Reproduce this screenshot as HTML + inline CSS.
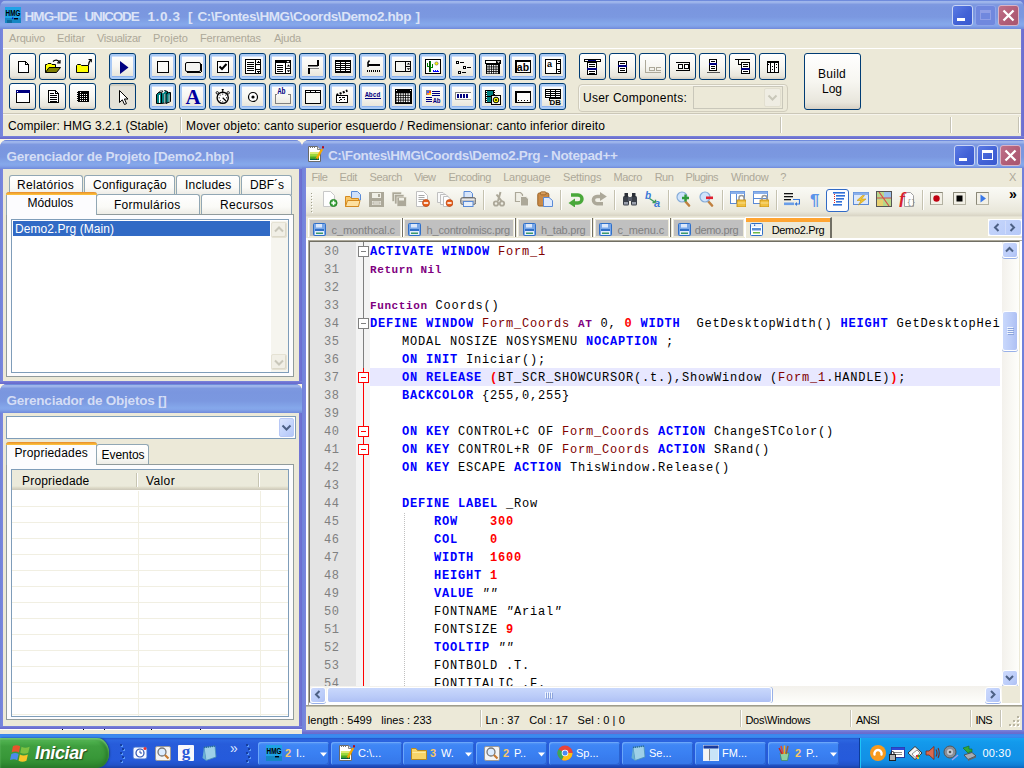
<!DOCTYPE html>
<html><head><meta charset="utf-8"><title>HMG-IDE</title>
<style>
html,body{margin:0;padding:0}
body{width:1024px;height:768px;position:relative;overflow:hidden;background:#fbf7e6;font:11px "Liberation Sans",sans-serif}
.a{position:absolute;box-sizing:border-box}
.t{white-space:pre;height:20px}

.tb{background:linear-gradient(180deg,#6f8bdc 0,#6f8bdc 1px,#a0b7ec 1px,#9cb3ea 2.5px,#7e99e0 4.5px,#7a96df 8px,#7b98e0 17px,#85a8eb 24px,#82a3e8 26px,#7089db 100%)}
.cap{color:#d8e0f6;text-shadow:none}
.xb{border:1px solid #003c74;border-radius:3px;background:linear-gradient(180deg,#fff 0,#f7f6f1 50%,#e8e6dc 88%,#d6d0c5 100%)}
.xb2{border:1px solid #003c74;border-radius:3px;background:linear-gradient(180deg,#fff 0,#f7f6f1 50%,#e8e6dc 88%,#d6d0c5 100%);box-shadow:inset 0 0 0 2px #a9c9f4, inset 0 -3px 0 0 #8db2ee, inset 0 3px 0 0 #cfe0fb}
.xbp{border:1px solid #003c74;border-radius:3px;background:#e4e2d8;box-shadow:inset 0 2px 1px #cfccc0}

.tab{border:1px solid #91a7b4;border-bottom:none;border-radius:3px 3px 0 0;background:linear-gradient(180deg,#fff 0,#fafaf7 60%,#ecebe4 100%)}
.tabsel{border:1px solid #91a7b4;border-bottom:none;border-radius:3px 3px 0 0;background:#fcfcfe;border-top:none}
.tabsel:before{content:"";position:absolute;left:-1px;right:-1px;top:0;height:3px;border-radius:3px 3px 0 0;background:linear-gradient(180deg,#e68b2c,#ffc73c)}
.pane{border:1px solid #919b9c;background:#fcfcfe}
.lv{border:1px solid #7f9db9;background:#fff}

.ntab{border:1px solid #fff;border-bottom:none;background:#c0c0c0;box-shadow:1px 0 0 #716f64,inset 0 0 0 1px #ece9d8}

.ed{position:absolute;left:310px;top:242px;width:690px;height:444px;overflow:hidden}
.ln{position:absolute;left:0;width:29.5px;text-align:right;font:12px/18px 'Liberation Mono',monospace;letter-spacing:.6px;color:#808080;height:18px;white-space:pre}
.cl{position:absolute;left:60px;font:12px/18px 'Liberation Mono',monospace;letter-spacing:.8px;height:18px;white-space:pre;color:#000}
.cl b.p{font-size:11px;letter-spacing:.6px}
.cl b{font-weight:bold}.cl i{font-style:italic}
</style></head>
<body>
<div class="a " style="left:0px;top:0px;width:1024px;height:12px;background:#6c7fd6"></div>
<div class="a " style="left:0px;top:0px;width:1024px;height:139px;background:#7079d6;border-radius:7px 7px 0 0"></div>
<div class="a tb" style="left:0px;top:0px;width:1024px;height:29px;border-radius:7px 7px 0 0"></div>
<div class="a " style="left:0px;top:29px;width:3px;height:108px;background:linear-gradient(90deg,#6f83da,#7c86de)"></div>
<div class="a " style="left:1021px;top:29px;width:3px;height:108px;background:linear-gradient(90deg,#7276d5,#6a6dcf)"></div>
<div class="a " style="left:3px;top:29px;width:1018px;height:107px;background:#ece9d8"></div>
<div class="a " style="left:0px;top:136px;width:1024px;height:3px;background:linear-gradient(180deg,#7b85dd,#6c6fd0 60%,#6a6bcb)"></div>
<svg class="a" style="left:5px;top:7px" width="16" height="16" viewBox="0 0 16 16"><rect width="16" height="16" fill="#1fa2e6"/><rect x="0" y="11" width="16" height="5" fill="#1587c4"/><rect x="2" y="13" width="5" height="3" fill="#0a6a9a"/><text x="0.5" y="9" font-family="Liberation Sans,sans-serif" font-weight="bold" font-size="8.5" textLength="15" lengthAdjust="spacingAndGlyphs" fill="#000">HMG</text><rect x="9" y="11" width="4" height="1.4" fill="#001"/><rect x="7" y="10.5" width="1.3" height="1.3" fill="#00c"/></svg>
<div class="a t" style="left:24.5px;top:7px;font:bold 13.5px/20px 'Liberation Sans',sans-serif;color:#dbe3f7;letter-spacing:-0.929px;">HMG-IDE</div>
<div class="a t" style="left:84.5px;top:7px;font:bold 13.5px/20px 'Liberation Sans',sans-serif;color:#dbe3f7;letter-spacing:-1.181px;">UNICODE</div>
<div class="a t" style="left:147.5px;top:7px;font:bold 13.5px/20px 'Liberation Sans',sans-serif;color:#dbe3f7;letter-spacing:0.594px;">1.0.3</div>
<div class="a t" style="left:188px;top:7px;font:bold 13.5px/20px 'Liberation Sans',sans-serif;color:#dbe3f7;letter-spacing:0.500px;">[</div>
<div class="a t" style="left:197.5px;top:7px;font:bold 13.5px/20px 'Liberation Sans',sans-serif;color:#dbe3f7;letter-spacing:-0.408px;">C:\Fontes\HMG\Coords\Demo2.hbp</div>
<div class="a t" style="left:415.5px;top:7px;font:bold 13.5px/20px 'Liberation Sans',sans-serif;color:#dbe3f7;letter-spacing:0.500px;">]</div>
<div class="a " style="left:952px;top:5px;width:21px;height:21px;background:linear-gradient(135deg,#5b7be4 0,#4262d6 55%,#3a5ad0 100%);border:1px solid #c9d5f5;border-radius:3px"><div class="a" style="left:4px;top:12px;width:8px;height:3px;background:#fff"></div></div>
<div class="a " style="left:975px;top:5px;width:21px;height:21px;background:#7088de;border:1px solid #8ea4ea;border-radius:3px"><div class="a" style="left:4px;top:4px;width:11px;height:10px;border:1px solid #8f9fe6;border-top:3px solid #8f9fe6"></div></div>
<div class="a " style="left:998px;top:5px;width:21px;height:21px;background:linear-gradient(135deg,#bf7088 0,#b05c76 60%,#a9566f 100%);border:1px solid #d9b4c6;border-radius:3px"><svg class="a" style="left:0;top:0" width="19" height="19"><path d="M4.5 4.5 L14.5 14.5 M14.5 4.5 L4.5 14.5" stroke="#fff" stroke-width="2.3" stroke-linecap="butt"/></svg></div>
<div class="a t" style="left:9px;top:28px;font:11px/20px 'Liberation Sans',sans-serif;color:#aca899;letter-spacing:-0.185px;">Arquivo</div>
<div class="a t" style="left:57px;top:28px;font:11px/20px 'Liberation Sans',sans-serif;color:#aca899;letter-spacing:-0.125px;">Editar</div>
<div class="a t" style="left:97px;top:28px;font:11px/20px 'Liberation Sans',sans-serif;color:#aca899;letter-spacing:-0.350px;">Visualizar</div>
<div class="a t" style="left:153px;top:28px;font:11px/20px 'Liberation Sans',sans-serif;color:#aca899;letter-spacing:0.020px;">Projeto</div>
<div class="a t" style="left:200px;top:28px;font:11px/20px 'Liberation Sans',sans-serif;color:#aca899;letter-spacing:-0.124px;">Ferramentas</div>
<div class="a t" style="left:274px;top:28px;font:11px/20px 'Liberation Sans',sans-serif;color:#aca899;letter-spacing:-0.228px;">Ajuda</div>
<div class="a " style="left:3px;top:48px;width:1018px;height:1px;background:#fff"></div>
<div class="a " style="left:3px;top:113px;width:1018px;height:1px;background:#cbc7b8"></div>
<div class="a " style="left:3px;top:114px;width:1018px;height:1px;background:#f6f4ec"></div>
<div class="a xb" style="left:9px;top:53px;width:27px;height:27px;"><svg class="a" style="left:-1px;top:-1px" width="27" height="27" viewBox="0 0 27 27" shape-rendering="crispEdges"><path d="M9.5 8.5H16.5L19.5 11.5V19.5H9.5Z" fill="#fff" stroke="#000" stroke-width="1" /><path d="M16.5 8.5V11.5H19.5" fill="none" stroke="#000" stroke-width="1" /></svg></div>
<div class="a xb" style="left:39px;top:53px;width:27px;height:27px;"><svg class="a" style="left:-1px;top:-1px" width="27" height="27" viewBox="0 0 27 27" shape-rendering="crispEdges"><g shape-rendering="geometricPrecision"><path d="M6.5 19.5V11.5H8L9 10.5H12L13 11.5H16.5V14" fill="#ff0" stroke="#000" stroke-width="1" /><path d="M6.5 19.5L10 14.5H21.5L17.5 19.5Z" fill="#808000" stroke="#000" stroke-width="1" /><path d="M14 8.5C16 6.5 19 6.5 20.5 9.5" fill="none" stroke="#000" stroke-width="1.2" /><path d="M18.2 9.8H21V7" fill="none" stroke="#000" stroke-width="1.2" /></g></svg></div>
<div class="a xb" style="left:69px;top:53px;width:27px;height:27px;"><svg class="a" style="left:-1px;top:-1px" width="27" height="27" viewBox="0 0 27 27" shape-rendering="crispEdges"><g shape-rendering="geometricPrecision"><path d="M7.5 19.5V12.5L8.5 11.5H11.5L12.5 12.5H19.5V19.5Z" fill="#ff0" stroke="#000" stroke-width="1" /><path d="M19.5 12C19.5 9.5 20.5 8 22 6.5" fill="none" stroke="#000" stroke-width="1.1" /><path d="M19.5 6.5H22.3V9.3" fill="none" stroke="#000" stroke-width="1.1" /></g></svg></div>
<div class="a xb2" style="left:109px;top:53px;width:27px;height:27px;"><svg class="a" style="left:-1px;top:-1px" width="27" height="27" viewBox="0 0 27 27" shape-rendering="crispEdges"><g shape-rendering="geometricPrecision"><path d="M11 8V21L19.5 14.5Z" fill="#000080" stroke="none" stroke-width="0" /></g></svg></div>
<div class="a xb2" style="left:149px;top:53px;width:27px;height:27px;"><svg class="a" style="left:-1px;top:-1px" width="27" height="27" viewBox="0 0 27 27" shape-rendering="crispEdges"><rect x="8.5" y="8.5" width="11" height="11" fill="#fbfbf8" stroke="#000" stroke-width="1"/></svg></div>
<div class="a xb2" style="left:179px;top:53px;width:27px;height:27px;"><svg class="a" style="left:-1px;top:-1px" width="27" height="27" viewBox="0 0 27 27" shape-rendering="crispEdges"><g shape-rendering="geometricPrecision"><rect x="6.5" y="9.5" width="15" height="9" rx="1.5" fill="#f4f4f0" stroke="#000" stroke-width="1"/></g><rect x="8" y="19" width="14" height="1" fill="#000"/><rect x="22" y="11" width="1" height="8" fill="#000"/></svg></div>
<div class="a xb2" style="left:209px;top:53px;width:27px;height:27px;"><svg class="a" style="left:-1px;top:-1px" width="27" height="27" viewBox="0 0 27 27" shape-rendering="crispEdges"><rect x="8.5" y="8.5" width="11" height="11" fill="#fff" stroke="#000" stroke-width="1"/><g shape-rendering="geometricPrecision"><path d="M10.5 13.5L13 16L17.5 11" fill="none" stroke="#000" stroke-width="2" /></g></svg></div>
<div class="a xb2" style="left:239px;top:53px;width:27px;height:27px;"><svg class="a" style="left:-1px;top:-1px" width="27" height="27" viewBox="0 0 27 27" shape-rendering="crispEdges"><rect x="6.5" y="6.5" width="15" height="14" fill="#fff" stroke="#000" stroke-width="1"/><rect x="6" y="6" width="16" height="1" fill="#000"/><rect x="8" y="9" width="7" height="1" fill="#000"/><rect x="8" y="11" width="7" height="1" fill="#000"/><rect x="8" y="13" width="7" height="1" fill="#000"/><rect x="8" y="15" width="7" height="1" fill="#000"/><rect x="8" y="17" width="7" height="1" fill="#000"/><rect x="16" y="6" width="1" height="15" fill="#000"/><rect x="17" y="11" width="5" height="1" fill="#000"/><rect x="17" y="16" width="5" height="1" fill="#000"/><rect x="19" y="8" width="1" height="1" fill="#000"/><rect x="18" y="9" width="3" height="1" fill="#000"/><rect x="18" y="18" width="3" height="1" fill="#000"/><rect x="19" y="19" width="1" height="1" fill="#000"/></svg></div>
<div class="a xb2" style="left:269px;top:53px;width:27px;height:27px;"><svg class="a" style="left:-1px;top:-1px" width="27" height="27" viewBox="0 0 27 27" shape-rendering="crispEdges"><rect x="6.5" y="7.5" width="15" height="13" fill="#fff" stroke="#000" stroke-width="1"/><rect x="6" y="7" width="16" height="3" fill="#000"/><g shape-rendering="geometricPrecision"><path d="M17.5 8L20.5 8L19 9.8Z" fill="#fff" stroke="none" stroke-width="0" /></g><rect x="16" y="10" width="1" height="11" fill="#000"/><rect x="8" y="12" width="6" height="1" fill="#000"/><rect x="8" y="14" width="6" height="1" fill="#000"/><rect x="8" y="16" width="6" height="1" fill="#000"/><rect x="8" y="18" width="6" height="1" fill="#000"/><rect x="17" y="15" width="5" height="1" fill="#000"/><g shape-rendering="geometricPrecision"><path d="M17.8 13.6L19.5 11.6L21.2 13.6Z" fill="#000" stroke="none" stroke-width="0" /><path d="M17.8 17.2L19.5 19.2L21.2 17.2Z" fill="#000" stroke="none" stroke-width="0" /></g></svg></div>
<div class="a xb2" style="left:299px;top:53px;width:27px;height:27px;"><svg class="a" style="left:-1px;top:-1px" width="27" height="27" viewBox="0 0 27 27" shape-rendering="crispEdges"><rect x="18" y="7" width="2" height="6" fill="#000"/><rect x="9" y="12" width="11" height="1" fill="#000"/><rect x="9" y="13" width="10" height="1" fill="#808080"/><rect x="9" y="15" width="11" height="1" fill="#808080"/><rect x="9" y="15" width="2" height="6" fill="#000"/></svg></div>
<div class="a xb2" style="left:329px;top:53px;width:27px;height:27px;"><svg class="a" style="left:-1px;top:-1px" width="27" height="27" viewBox="0 0 27 27" shape-rendering="crispEdges"><rect x="6" y="7" width="16" height="13" fill="#000"/><rect x="7" y="9" width="4" height="1" fill="#fff"/><rect x="7" y="11" width="4" height="1" fill="#fff"/><rect x="7" y="13" width="4" height="1" fill="#fff"/><rect x="7" y="15" width="4" height="1" fill="#fff"/><rect x="7" y="17" width="4" height="1" fill="#fff"/><rect x="12" y="9" width="4" height="1" fill="#fff"/><rect x="12" y="11" width="4" height="1" fill="#fff"/><rect x="12" y="13" width="4" height="1" fill="#fff"/><rect x="12" y="15" width="4" height="1" fill="#fff"/><rect x="12" y="17" width="4" height="1" fill="#fff"/><rect x="17" y="9" width="4" height="1" fill="#fff"/><rect x="17" y="11" width="4" height="1" fill="#fff"/><rect x="17" y="13" width="4" height="1" fill="#fff"/><rect x="17" y="15" width="4" height="1" fill="#fff"/><rect x="17" y="17" width="4" height="1" fill="#fff"/></svg></div>
<div class="a xb2" style="left:359px;top:53px;width:27px;height:27px;"><svg class="a" style="left:-1px;top:-1px" width="27" height="27" viewBox="0 0 27 27" shape-rendering="crispEdges"><rect x="9" y="11" width="12" height="2" fill="#000"/><g shape-rendering="geometricPrecision"><path d="M9 14V9.5L10.5 7.5" fill="none" stroke="#000" stroke-width="1.5" /></g><rect x="8" y="17" width="1" height="2" fill="#000"/><rect x="10" y="17" width="1" height="2" fill="#000"/><rect x="12" y="17" width="1" height="2" fill="#000"/><rect x="14" y="17" width="1" height="2" fill="#000"/><rect x="16" y="17" width="1" height="2" fill="#000"/><rect x="18" y="17" width="1" height="2" fill="#000"/><rect x="20" y="17" width="1" height="2" fill="#000"/></svg></div>
<div class="a xb2" style="left:389px;top:53px;width:27px;height:27px;"><svg class="a" style="left:-1px;top:-1px" width="27" height="27" viewBox="0 0 27 27" shape-rendering="crispEdges"><rect x="6.5" y="8.5" width="15" height="10" fill="#f4f4f0" stroke="#000" stroke-width="1"/><rect x="6" y="18" width="16" height="1" fill="#000"/><rect x="16" y="8" width="1" height="11" fill="#000"/><rect x="16" y="13" width="6" height="1" fill="#000"/><g shape-rendering="geometricPrecision"><path d="M17.8 11.6L19.5 9.8L21.2 11.6Z" fill="#000" stroke="none" stroke-width="0" /><path d="M17.8 15.2L19.5 17L21.2 15.2Z" fill="#000" stroke="none" stroke-width="0" /></g></svg></div>
<div class="a xb2" style="left:419px;top:53px;width:27px;height:27px;"><svg class="a" style="left:-1px;top:-1px" width="27" height="27" viewBox="0 0 27 27" shape-rendering="crispEdges"><rect x="6.5" y="6.5" width="15" height="14" fill="#fff" stroke="#000" stroke-width="1"/><rect x="10" y="8" width="2" height="11" fill="#008000"/><rect x="8" y="10" width="1" height="4" fill="#008000"/><rect x="8" y="13" width="3" height="1" fill="#008000"/><rect x="13" y="11" width="1" height="4" fill="#008000"/><rect x="11" y="14" width="3" height="1" fill="#008000"/><rect x="10" y="8" width="1" height="11" fill="#004000"/><g shape-rendering="geometricPrecision"><circle cx="17.5" cy="10.5" r="1.6" fill="#ff0" stroke="#555" stroke-width=".6"/></g><rect x="14" y="18" width="6" height="1" fill="#00f"/><rect x="14" y="17" width="1" height="1" fill="#00f"/><rect x="16" y="17" width="1" height="1" fill="#00f"/><rect x="18" y="17" width="1" height="1" fill="#00f"/></svg></div>
<div class="a xb2" style="left:449px;top:53px;width:27px;height:27px;"><svg class="a" style="left:-1px;top:-1px" width="27" height="27" viewBox="0 0 27 27" shape-rendering="crispEdges"><rect x="7.5" y="8.5" width="2" height="2" fill="#fff" stroke="#000" stroke-width="1"/><rect x="11" y="9" width="4" height="1" fill="#000"/><rect x="14.5" y="13.5" width="2" height="2" fill="#fff" stroke="#000" stroke-width="1"/><rect x="18" y="14" width="4" height="1" fill="#000"/><rect x="9.5" y="18.5" width="2" height="2" fill="#fff" stroke="#000" stroke-width="1"/><rect x="13" y="19" width="4" height="1" fill="#000"/></svg></div>
<div class="a xb2" style="left:479px;top:53px;width:27px;height:27px;"><svg class="a" style="left:-1px;top:-1px" width="27" height="27" viewBox="0 0 27 27" shape-rendering="crispEdges"><rect x="6.5" y="7.5" width="15" height="3" fill="#fff" stroke="#000" stroke-width="1"/><rect x="17" y="7" width="5" height="4" fill="#000"/><g shape-rendering="geometricPrecision"><path d="M18 8.2L21 8.2L19.5 10Z" fill="#fff" stroke="none" stroke-width="0" /></g><rect x="7" y="10" width="14" height="11" fill="#000"/><g shape-rendering="geometricPrecision"><rect x="8.2" y="12.0" width="1.5" height="1.5" fill="#fff"/><rect x="8.2" y="14.3" width="1.5" height="1.5" fill="#fff"/><rect x="8.2" y="16.6" width="1.5" height="1.5" fill="#fff"/><rect x="8.2" y="18.9" width="1.5" height="1.5" fill="#fff"/><rect x="10.5" y="12.0" width="1.5" height="1.5" fill="#fff"/><rect x="10.5" y="14.3" width="1.5" height="1.5" fill="#fff"/><rect x="10.5" y="16.6" width="1.5" height="1.5" fill="#fff"/><rect x="10.5" y="18.9" width="1.5" height="1.5" fill="#fff"/><rect x="12.799999999999999" y="12.0" width="1.5" height="1.5" fill="#fff"/><rect x="12.799999999999999" y="14.3" width="1.5" height="1.5" fill="#fff"/><rect x="12.799999999999999" y="16.6" width="1.5" height="1.5" fill="#fff"/><rect x="12.799999999999999" y="18.9" width="1.5" height="1.5" fill="#fff"/><rect x="15.099999999999998" y="12.0" width="1.5" height="1.5" fill="#fff"/><rect x="15.099999999999998" y="14.3" width="1.5" height="1.5" fill="#fff"/><rect x="15.099999999999998" y="16.6" width="1.5" height="1.5" fill="#fff"/><rect x="15.099999999999998" y="18.9" width="1.5" height="1.5" fill="#fff"/><rect x="17.4" y="12.0" width="1.5" height="1.5" fill="#fff"/><rect x="17.4" y="14.3" width="1.5" height="1.5" fill="#fff"/><rect x="17.4" y="16.6" width="1.5" height="1.5" fill="#fff"/><rect x="17.4" y="18.9" width="1.5" height="1.5" fill="#fff"/></g></svg></div>
<div class="a xb2" style="left:509px;top:53px;width:27px;height:27px;"><svg class="a" style="left:-1px;top:-1px" width="27" height="27" viewBox="0 0 27 27" shape-rendering="crispEdges"><rect x="6.75" y="7.75" width="14.5" height="11.5" fill="#fff" stroke="#000" stroke-width="1.5"/><text x="14" y="17.6" text-anchor="middle" font-family="Liberation Sans,sans-serif" font-weight="bold" font-size="10.5" fill="#000" shape-rendering="geometricPrecision">ab</text></svg></div>
<div class="a xb2" style="left:539px;top:53px;width:27px;height:27px;"><svg class="a" style="left:-1px;top:-1px" width="27" height="27" viewBox="0 0 27 27" shape-rendering="crispEdges"><rect x="6.5" y="6.5" width="15" height="14" fill="#fff" stroke="#000" stroke-width="1"/><rect x="6" y="20" width="16" height="1" fill="#000"/><text x="8" y="14" font-family="Liberation Sans,sans-serif" font-weight="bold" font-size="9" fill="#000">a</text><rect x="17" y="6" width="1" height="15" fill="#000"/><rect x="18" y="10" width="4" height="1" fill="#000"/><rect x="18" y="16" width="4" height="1" fill="#000"/><rect x="19" y="8" width="2" height="1" fill="#000"/><rect x="19" y="18" width="2" height="1" fill="#000"/></svg></div>
<div class="a xb" style="left:579px;top:53px;width:27px;height:27px;"><svg class="a" style="left:-1px;top:-1px" width="27" height="27" viewBox="0 0 27 27" shape-rendering="crispEdges"><rect x="5.5" y="6.5" width="16" height="2" fill="#fff" stroke="#000" stroke-width="1"/><rect x="9" y="7" width="8" height="1" fill="#000080"/><rect x="8.5" y="9.5" width="9" height="12" fill="#fff" stroke="#000" stroke-width="1"/><rect x="10" y="11" width="6" height="1" fill="#000"/><rect x="10" y="13" width="6" height="1" fill="#000"/><rect x="8" y="15" width="10" height="2" fill="#000080"/><rect x="10" y="18" width="6" height="1" fill="#000"/><rect x="10" y="20" width="6" height="1" fill="#000"/></svg></div>
<div class="a xb" style="left:609px;top:53px;width:27px;height:27px;"><svg class="a" style="left:-1px;top:-1px" width="27" height="27" viewBox="0 0 27 27" shape-rendering="crispEdges"><rect x="9.5" y="8.5" width="8" height="11" fill="#fff" stroke="#000" stroke-width="1"/><rect x="11" y="10" width="5" height="1" fill="#000"/><rect x="9" y="12" width="9" height="2" fill="#000080"/><rect x="11" y="15" width="5" height="1" fill="#000"/><rect x="11" y="17" width="5" height="1" fill="#000"/></svg></div>
<div class="a xb" style="left:639px;top:53px;width:27px;height:27px;"><svg class="a" style="left:-1px;top:-1px" width="27" height="27" viewBox="0 0 27 27" shape-rendering="crispEdges"><rect x="6" y="7" width="1" height="13" fill="#aca899"/><rect x="6" y="19" width="16" height="1" fill="#aca899"/><rect x="10.5" y="14.5" width="5" height="3" fill="none" stroke="#aca899" stroke-width="1"/><rect x="17" y="14" width="5" height="1" fill="#aca899"/><rect x="17" y="14" width="1" height="4" fill="#aca899"/><rect x="17" y="17" width="5" height="1" fill="#aca899"/></svg></div>
<div class="a xb" style="left:669px;top:53px;width:27px;height:27px;"><svg class="a" style="left:-1px;top:-1px" width="27" height="27" viewBox="0 0 27 27" shape-rendering="crispEdges"><rect x="7" y="9" width="14" height="1" fill="#000"/><rect x="20" y="9" width="1" height="9" fill="#000"/><rect x="7" y="17" width="14" height="1" fill="#000"/><rect x="9.5" y="11.5" width="4" height="4" fill="#fff" stroke="#000" stroke-width="1"/><rect x="15.5" y="11.5" width="4" height="4" fill="#fff" stroke="#000" stroke-width="1"/></svg></div>
<div class="a xb" style="left:699px;top:53px;width:27px;height:27px;"><svg class="a" style="left:-1px;top:-1px" width="27" height="27" viewBox="0 0 27 27" shape-rendering="crispEdges"><rect x="10.5" y="6.5" width="7" height="11" fill="#fff" stroke="#000" stroke-width="1"/><rect x="12" y="8" width="4" height="1" fill="#000"/><rect x="10" y="10" width="8" height="2" fill="#000080"/><rect x="12" y="13" width="4" height="1" fill="#000"/><rect x="12" y="15" width="4" height="1" fill="#000"/><rect x="8" y="19" width="13" height="1" fill="#555"/></svg></div>
<div class="a xb" style="left:729px;top:53px;width:27px;height:27px;"><svg class="a" style="left:-1px;top:-1px" width="27" height="27" viewBox="0 0 27 27" shape-rendering="crispEdges"><rect x="6" y="6" width="15" height="1" fill="#000"/><rect x="9" y="7" width="1" height="5" fill="#000"/><rect x="9" y="11" width="3" height="1" fill="#000"/><rect x="12.5" y="9.5" width="8" height="11" fill="#fff" stroke="#000" stroke-width="1"/><rect x="14" y="11" width="5" height="1" fill="#000"/><rect x="14" y="13" width="5" height="1" fill="#000"/><rect x="12" y="15" width="9" height="2" fill="#000080"/><rect x="14" y="18" width="5" height="1" fill="#000"/></svg></div>
<div class="a xb" style="left:759px;top:53px;width:27px;height:27px;"><svg class="a" style="left:-1px;top:-1px" width="27" height="27" viewBox="0 0 27 27" shape-rendering="crispEdges"><rect x="8" y="8" width="12" height="12" fill="#000"/><rect x="9" y="10" width="2" height="9" fill="#fff"/><rect x="12" y="10" width="3" height="9" fill="#fff"/><rect x="16" y="10" width="3" height="9" fill="#fff"/><rect x="9" y="11" width="1" height="1" fill="#000"/><rect x="13" y="13" width="1" height="1" fill="#000"/><rect x="13" y="16" width="1" height="1" fill="#000"/><rect x="17" y="11" width="1" height="1" fill="#000"/><rect x="17" y="14" width="1" height="1" fill="#000"/></svg></div>
<div class="a xb" style="left:9px;top:83px;width:27px;height:27px;"><svg class="a" style="left:-1px;top:-1px" width="27" height="27" viewBox="0 0 27 27" shape-rendering="crispEdges"><rect x="7.5" y="7.5" width="13" height="12" fill="#fff" stroke="#000" stroke-width="1"/><rect x="7" y="7" width="14" height="3" fill="#000080"/><rect x="8" y="8" width="1" height="1" fill="#fff"/><rect x="7" y="19" width="14" height="1" fill="#000"/></svg></div>
<div class="a xb" style="left:39px;top:83px;width:27px;height:27px;"><svg class="a" style="left:-1px;top:-1px" width="27" height="27" viewBox="0 0 27 27" shape-rendering="crispEdges"><path d="M9.5 7.5H16.5L19.5 10.5V19.5H9.5Z" fill="#fff" stroke="#000" stroke-width="1" /><path d="M16.5 7.5V10.5H19.5" fill="none" stroke="#000" stroke-width="1" /><rect x="11" y="10" width="4" height="1" fill="#000"/><rect x="11" y="12" width="7" height="1" fill="#000"/><rect x="11" y="14" width="7" height="1" fill="#000"/><rect x="11" y="16" width="7" height="1" fill="#000"/><rect x="11" y="18" width="7" height="1" fill="#000"/></svg></div>
<div class="a xb" style="left:69px;top:83px;width:27px;height:27px;"><svg class="a" style="left:-1px;top:-1px" width="27" height="27" viewBox="0 0 27 27" shape-rendering="crispEdges"><defs><pattern id="chk" width="2" height="2" patternUnits="userSpaceOnUse"><rect width="2" height="2" fill="#000"/><rect x="1" y="1" width="1" height="1" fill="#fff"/></pattern></defs><rect x="9" y="8" width="11" height="11" fill="url(#chk)"/><rect x="9.5" y="8.5" width="10" height="10" fill="none" stroke="#000" stroke-width="1"/><rect x="13" y="9" width="6" height="2" fill="#000"/><rect x="8" y="9" width="2" height="1" fill="#000"/><rect x="8" y="11" width="2" height="1" fill="#000"/><rect x="8" y="13" width="2" height="1" fill="#000"/><rect x="8" y="15" width="2" height="1" fill="#000"/><rect x="8" y="17" width="2" height="1" fill="#000"/></svg></div>
<div class="a xbp" style="left:109px;top:83px;width:27px;height:27px;"><svg class="a" style="left:-1px;top:-1px" width="27" height="27" viewBox="0 0 27 27" shape-rendering="crispEdges"><g shape-rendering="geometricPrecision"><path d="M10.5 7.5V19.5L13.3 16.8L15.5 21.5L17.5 20.6L15.4 16H19Z" fill="#fff" stroke="#000" stroke-width="1" /></g></svg></div>
<div class="a xb2" style="left:149px;top:83px;width:27px;height:27px;"><svg class="a" style="left:-1px;top:-1px" width="27" height="27" viewBox="0 0 27 27" shape-rendering="crispEdges"><g shape-rendering="geometricPrecision"><path d="M7.5 11.5L9.5 9.5H12.5V20.5H7.5Z" fill="#008080" stroke="#000" stroke-width="1" /><path d="M9.5 9.5L11.5 8H14L12.5 9.5Z" fill="#fff" stroke="#000" stroke-width="0.8" /><path d="M12.5 10.5L15.5 7.5L18.5 8.5V19.5L12.5 20.5Z" fill="#008080" stroke="#000" stroke-width="1" /><path d="M13.5 10L15.5 8" fill="none" stroke="#fff" stroke-width="1.3" /><path d="M17 11L19.5 9.5H21.5V18.5L17 20.5Z" fill="#008080" stroke="#000" stroke-width="1" /><rect x="10" y="12" width="1" height="8" fill="#fff"/><rect x="15.3" y="11" width="1" height="9" fill="#c0c0c0"/><rect x="19.6" y="11.5" width="1" height="7.5" fill="#c0c0c0"/></g></svg></div>
<div class="a xb2" style="left:179px;top:83px;width:27px;height:27px;"><svg class="a" style="left:-1px;top:-1px" width="27" height="27" viewBox="0 0 27 27" shape-rendering="crispEdges"><text x="14" y="21" text-anchor="middle" font-family="Liberation Serif,serif" font-weight="bold" font-size="21" fill="#0000a0" shape-rendering="geometricPrecision">A</text></svg></div>
<div class="a xb2" style="left:209px;top:83px;width:27px;height:27px;"><svg class="a" style="left:-1px;top:-1px" width="27" height="27" viewBox="0 0 27 27" shape-rendering="crispEdges"><g shape-rendering="geometricPrecision"><circle cx="13.7" cy="14.8" r="5.6" fill="#fff" stroke="#000" stroke-width="1.4"/><rect x="12.7" y="6" width="2" height="1.2" fill="#000"/><rect x="13.2" y="7" width="1" height="2" fill="#000"/><circle cx="8.3" cy="9.8" r="1.2" fill="#fff" stroke="#000" stroke-width=".9"/><circle cx="19.2" cy="9.8" r="1.2" fill="#fff" stroke="#000" stroke-width=".9"/><path d="M13.7 14.8L17 18" fill="none" stroke="#000" stroke-width="1.2" /><rect x="13.2" y="10.6" width="1" height="1" fill="#000"/><rect x="13.2" y="18.4" width="1" height="1" fill="#000"/><rect x="9.7" y="14.3" width="1" height="1" fill="#000"/><rect x="17" y="14.3" width="1" height="1" fill="#000"/><rect x="10.7" y="11.7" width="0.9" height="0.9" fill="#000"/><rect x="16.2" y="11.7" width="0.9" height="0.9" fill="#000"/><rect x="10.9" y="17.2" width="0.9" height="0.9" fill="#000"/></g></svg></div>
<div class="a xb2" style="left:239px;top:83px;width:27px;height:27px;"><svg class="a" style="left:-1px;top:-1px" width="27" height="27" viewBox="0 0 27 27" shape-rendering="crispEdges"><g shape-rendering="geometricPrecision"><circle cx="14" cy="14" r="4.5" fill="#fff" stroke="#000" stroke-width="1.2"/><circle cx="14" cy="14" r="1.6" fill="#000"/></g></svg></div>
<div class="a xb2" style="left:269px;top:83px;width:27px;height:27px;"><svg class="a" style="left:-1px;top:-1px" width="27" height="27" viewBox="0 0 27 27" shape-rendering="crispEdges"><rect x="6" y="11" width="1" height="10" fill="#808080"/><rect x="6" y="20" width="16" height="1" fill="#808080"/><rect x="21" y="11" width="1" height="10" fill="#808080"/><rect x="6" y="11" width="2" height="1" fill="#808080"/><rect x="19" y="11" width="3" height="1" fill="#808080"/><text x="8.6" y="11.2" font-family="Liberation Mono,monospace" font-weight="bold" font-size="8.5" fill="#000080" textLength="8" lengthAdjust="spacingAndGlyphs" shape-rendering="geometricPrecision">Ab</text></svg></div>
<div class="a xb2" style="left:299px;top:83px;width:27px;height:27px;"><svg class="a" style="left:-1px;top:-1px" width="27" height="27" viewBox="0 0 27 27" shape-rendering="crispEdges"><rect x="6.7" y="9.7" width="14.6" height="10.6" fill="#f8f8f4" stroke="#000" stroke-width="1.4"/><rect x="6.5" y="7.5" width="5" height="2" fill="#fff" stroke="#000" stroke-width="1"/><rect x="11.5" y="7.5" width="5" height="2" fill="#fff" stroke="#000" stroke-width="1"/><rect x="16.5" y="7.5" width="5" height="2" fill="#fff" stroke="#000" stroke-width="1"/></svg></div>
<div class="a xb2" style="left:329px;top:83px;width:27px;height:27px;"><svg class="a" style="left:-1px;top:-1px" width="27" height="27" viewBox="0 0 27 27" shape-rendering="crispEdges"><rect x="7.65" y="12.65" width="10.7" height="6.7" fill="#fff" stroke="#000" stroke-width="1.3"/><g shape-rendering="geometricPrecision"><path d="M7.5 12L18.5 7.5" fill="none" stroke="#000" stroke-width="2.2" stroke-dasharray="2 1.4"/></g><rect x="10" y="14" width="2" height="1" fill="#000"/><rect x="13" y="14" width="3" height="1" fill="#000"/><rect x="11" y="16" width="2" height="1" fill="#000"/><rect x="15" y="16" width="1" height="1" fill="#000"/><rect x="10" y="17" width="1" height="1" fill="#000"/></svg></div>
<div class="a xb2" style="left:359px;top:83px;width:27px;height:27px;"><svg class="a" style="left:-1px;top:-1px" width="27" height="27" viewBox="0 0 27 27" shape-rendering="crispEdges"><text x="6" y="14" font-family="Liberation Mono,monospace" font-weight="bold" font-size="7.5" fill="#000080" textLength="15.5" lengthAdjust="spacingAndGlyphs" shape-rendering="geometricPrecision">Abcd</text><rect x="6" y="15" width="15.5" height="1" fill="#000080"/></svg></div>
<div class="a xb2" style="left:389px;top:83px;width:27px;height:27px;"><svg class="a" style="left:-1px;top:-1px" width="27" height="27" viewBox="0 0 27 27" shape-rendering="crispEdges"><rect x="6" y="6" width="17" height="15" fill="#000"/><rect x="7" y="7" width="1" height="1" fill="#fff"/><rect x="21" y="7" width="1" height="1" fill="#fff"/><g shape-rendering="geometricPrecision"><rect x="7.4" y="10.3" width="1.6" height="1.6" fill="#fff"/><rect x="7.4" y="12.700000000000001" width="1.6" height="1.6" fill="#fff"/><rect x="7.4" y="15.100000000000001" width="1.6" height="1.6" fill="#fff"/><rect x="7.4" y="17.5" width="1.6" height="1.6" fill="#fff"/><rect x="9.8" y="10.3" width="1.6" height="1.6" fill="#fff"/><rect x="9.8" y="12.700000000000001" width="1.6" height="1.6" fill="#fff"/><rect x="9.8" y="15.100000000000001" width="1.6" height="1.6" fill="#fff"/><rect x="9.8" y="17.5" width="1.6" height="1.6" fill="#fff"/><rect x="12.2" y="10.3" width="1.6" height="1.6" fill="#fff"/><rect x="12.2" y="12.700000000000001" width="1.6" height="1.6" fill="#fff"/><rect x="12.2" y="15.100000000000001" width="1.6" height="1.6" fill="#fff"/><rect x="12.2" y="17.5" width="1.6" height="1.6" fill="#fff"/><rect x="14.6" y="10.3" width="1.6" height="1.6" fill="#fff"/><rect x="14.6" y="12.700000000000001" width="1.6" height="1.6" fill="#fff"/><rect x="14.6" y="15.100000000000001" width="1.6" height="1.6" fill="#fff"/><rect x="14.6" y="17.5" width="1.6" height="1.6" fill="#fff"/><rect x="17.0" y="10.3" width="1.6" height="1.6" fill="#fff"/><rect x="17.0" y="12.700000000000001" width="1.6" height="1.6" fill="#fff"/><rect x="17.0" y="15.100000000000001" width="1.6" height="1.6" fill="#fff"/><rect x="17.0" y="17.5" width="1.6" height="1.6" fill="#fff"/><rect x="19.4" y="10.3" width="1.6" height="1.6" fill="#fff"/><rect x="19.4" y="12.700000000000001" width="1.6" height="1.6" fill="#fff"/><rect x="19.4" y="15.100000000000001" width="1.6" height="1.6" fill="#fff"/><rect x="19.4" y="17.5" width="1.6" height="1.6" fill="#fff"/></g></svg></div>
<div class="a xb2" style="left:419px;top:83px;width:27px;height:27px;"><svg class="a" style="left:-1px;top:-1px" width="27" height="27" viewBox="0 0 27 27" shape-rendering="crispEdges"><rect x="7" y="7" width="5" height="5" fill="#808080"/><rect x="8" y="8" width="2" height="2" fill="#4060ff"/><rect x="10" y="8" width="2" height="2" fill="#ff4020"/><rect x="8" y="10" width="2" height="2" fill="#ff8040"/><rect x="10" y="10" width="2" height="2" fill="#ffe000"/><rect x="13" y="8" width="8" height="1" fill="#000080"/><rect x="13" y="10" width="8" height="1" fill="#000080"/><rect x="13" y="12" width="8" height="1" fill="#000080"/><rect x="7" y="14" width="6" height="1" fill="#000080"/><rect x="7" y="16" width="6" height="1" fill="#000080"/><rect x="7" y="18" width="6" height="1" fill="#000080"/><text x="14" y="19.5" font-family="Liberation Mono,monospace" font-weight="bold" font-size="8" fill="#000080" textLength="7.5" lengthAdjust="spacingAndGlyphs" shape-rendering="geometricPrecision">Ab</text></svg></div>
<div class="a xb2" style="left:449px;top:83px;width:27px;height:27px;"><svg class="a" style="left:-1px;top:-1px" width="27" height="27" viewBox="0 0 27 27" shape-rendering="crispEdges"><rect x="6" y="9" width="16" height="1" fill="#808080"/><rect x="6" y="9" width="1" height="8" fill="#808080"/><rect x="6" y="16" width="16" height="1" fill="#a0a0a0"/><rect x="7" y="10" width="15" height="6" fill="#fff"/><rect x="8" y="11" width="2" height="4" fill="#000080"/><rect x="11" y="11" width="2" height="4" fill="#000080"/><rect x="14" y="11" width="2" height="4" fill="#000080"/><rect x="17" y="11" width="2" height="4" fill="#000080"/></svg></div>
<div class="a xb2" style="left:479px;top:83px;width:27px;height:27px;"><svg class="a" style="left:-1px;top:-1px" width="27" height="27" viewBox="0 0 27 27" shape-rendering="crispEdges"><rect x="6" y="7" width="10" height="13" fill="#000"/><rect x="8" y="8" width="6" height="5" fill="#008080"/><rect x="8" y="14" width="6" height="5" fill="#008080"/><rect x="6.7" y="8" width="0.8" height="0.8" fill="#fff"/><rect x="6.7" y="10" width="0.8" height="0.8" fill="#fff"/><rect x="6.7" y="12" width="0.8" height="0.8" fill="#fff"/><rect x="6.7" y="14" width="0.8" height="0.8" fill="#fff"/><rect x="6.7" y="16" width="0.8" height="0.8" fill="#fff"/><rect x="6.7" y="18" width="0.8" height="0.8" fill="#fff"/><rect x="14.7" y="8" width="0.8" height="0.8" fill="#fff"/><rect x="14.7" y="10" width="0.8" height="0.8" fill="#fff"/><rect x="14.7" y="12" width="0.8" height="0.8" fill="#fff"/><rect x="14.7" y="14" width="0.8" height="0.8" fill="#fff"/><rect x="14.7" y="16" width="0.8" height="0.8" fill="#fff"/><rect x="14.7" y="18" width="0.8" height="0.8" fill="#fff"/><rect x="12.5" y="12.5" width="9" height="9" fill="#f4f4f0" stroke="#000" stroke-width="1"/><g shape-rendering="geometricPrecision"><circle cx="17" cy="17" r="2.8" fill="#ff0" stroke="#000" stroke-width="1"/><circle cx="17" cy="17" r="1" fill="#000"/></g></svg></div>
<div class="a xb2" style="left:509px;top:83px;width:27px;height:27px;"><svg class="a" style="left:-1px;top:-1px" width="27" height="27" viewBox="0 0 27 27" shape-rendering="crispEdges"><rect x="6.75" y="8.75" width="14.5" height="10.5" fill="#fdfdfb" stroke="#000" stroke-width="1.5"/><rect x="9" y="17" width="1" height="1" fill="#000"/><rect x="12" y="17" width="1" height="1" fill="#000"/><rect x="15" y="17" width="1" height="1" fill="#000"/><rect x="18" y="17" width="1" height="1" fill="#000"/></svg></div>
<div class="a xb2" style="left:539px;top:83px;width:27px;height:27px;"><svg class="a" style="left:-1px;top:-1px" width="27" height="27" viewBox="0 0 27 27" shape-rendering="crispEdges"><rect x="6" y="6" width="16" height="10" fill="#000"/><rect x="7" y="7" width="4" height="1" fill="#fff"/><rect x="7" y="9" width="4" height="1" fill="#fff"/><rect x="7" y="11" width="4" height="1" fill="#fff"/><rect x="7" y="13" width="4" height="1" fill="#fff"/><rect x="12" y="7" width="4" height="1" fill="#fff"/><rect x="12" y="9" width="4" height="1" fill="#fff"/><rect x="12" y="11" width="4" height="1" fill="#fff"/><rect x="12" y="13" width="4" height="1" fill="#fff"/><rect x="17" y="7" width="4" height="1" fill="#fff"/><rect x="17" y="9" width="4" height="1" fill="#fff"/><rect x="17" y="11" width="4" height="1" fill="#fff"/><rect x="17" y="13" width="4" height="1" fill="#fff"/><rect x="6" y="15" width="5" height="1" fill="#fff"/><rect x="6" y="16" width="11" height="6" fill="none"/><rect x="10" y="14" width="1" height="4" fill="#000"/><text x="10.6" y="22" font-family="Liberation Sans,sans-serif" font-weight="bold" font-size="7.5" fill="#000" textLength="11.4" lengthAdjust="spacingAndGlyphs" shape-rendering="geometricPrecision">DB</text></svg></div>
<div class="a " style="left:578px;top:84px;width:210px;height:28px;border:1px solid #d0ccbc;border-radius:4px;box-shadow:inset 1px 1px 0 #f8f7f0"></div>
<div class="a t" style="left:583px;top:88px;font:12px/20px 'Liberation Sans',sans-serif;color:#000;letter-spacing:0.247px;">User Components:</div>
<div class="a " style="left:693px;top:86px;width:90px;height:23px;border:1px solid #c9c7ba;background:#ece9d8"></div>
<div class="a " style="left:764px;top:88px;width:17px;height:19px;border:1px solid #e2dfd0;border-radius:2px;background:#efede3"><svg class="a" style="left:0;top:0" width="15" height="17"><path d="M3.5 6.5L7.5 10.5L11.5 6.5" fill="none" stroke="#c9c7ba" stroke-width="2"/></svg></div>
<div class="a xb" style="left:804px;top:53px;width:57px;height:57px;"></div>
<div class="a t" style="left:818px;top:64px;font:12px/20px 'Liberation Sans',sans-serif;color:#000;letter-spacing:0.263px;">Build</div>
<div class="a t" style="left:822px;top:79px;font:12px/20px 'Liberation Sans',sans-serif;color:#000;letter-spacing:-0.010px;">Log</div>
<div class="a t" style="left:8px;top:116px;font:12px/20px 'Liberation Sans',sans-serif;color:#000;letter-spacing:0.069px;">Compiler: HMG 3.2.1 (Stable)</div>
<div class="a t" style="left:186px;top:116px;font:12px/20px 'Liberation Sans',sans-serif;color:#000;letter-spacing:0.140px;">Mover objeto: canto superior esquerdo / Redimensionar: canto inferior direito</div>
<div class="a " style="left:180px;top:117px;width:1px;height:16px;background:#c5c2b4"></div>
<div class="a " style="left:181px;top:117px;width:1px;height:16px;background:#fff"></div>
<div class="a " style="left:780px;top:117px;width:1px;height:16px;background:#c5c2b4"></div>
<div class="a " style="left:781px;top:117px;width:1px;height:16px;background:#fff"></div>
<div class="a " style="left:950px;top:117px;width:1px;height:16px;background:#c5c2b4"></div>
<div class="a " style="left:951px;top:117px;width:1px;height:16px;background:#fff"></div>
<div class="a " style="left:1018px;top:117px;width:1px;height:16px;background:#c5c2b4"></div>
<div class="a " style="left:1019px;top:117px;width:1px;height:16px;background:#fff"></div>
<div class="a " style="left:0px;top:140px;width:302px;height:244px;background:#7079d6;border-radius:7px 7px 0 0"></div>
<div class="a tb" style="left:0px;top:140px;width:302px;height:29px;border-radius:7px 7px 0 0"></div>
<div class="a " style="left:0px;top:169px;width:3px;height:212px;background:linear-gradient(90deg,#6f83da,#7c86de)"></div>
<div class="a " style="left:299px;top:169px;width:3px;height:212px;background:linear-gradient(90deg,#7276d5,#6a6dcf)"></div>
<div class="a " style="left:3px;top:169px;width:296px;height:212px;background:#ece9d8"></div>
<div class="a " style="left:0px;top:381px;width:302px;height:3px;background:linear-gradient(180deg,#7b85dd,#6c6fd0 60%,#6a6bcb)"></div>
<div class="a t" style="left:6.5px;top:147px;font:bold 13.5px/20px 'Liberation Sans',sans-serif;color:#d4ddf5;letter-spacing:-0.251px;">Gerenciador de Projeto [Demo2.hbp]</div>
<div class="a tab" style="left:9px;top:175px;width:74px;height:20px;"></div>
<div class="a t" style="left:17px;top:175px;font:12px/20px 'Liberation Sans',sans-serif;color:#000;letter-spacing:0.297px;">Relatórios</div>
<div class="a tab" style="left:84px;top:175px;width:91px;height:20px;"></div>
<div class="a t" style="left:93px;top:175px;font:12px/20px 'Liberation Sans',sans-serif;color:#000;letter-spacing:0.217px;">Configuração</div>
<div class="a tab" style="left:176px;top:175px;width:64px;height:20px;"></div>
<div class="a t" style="left:185px;top:175px;font:12px/20px 'Liberation Sans',sans-serif;color:#000;letter-spacing:0.225px;">Includes</div>
<div class="a tab" style="left:241px;top:175px;width:51px;height:20px;"></div>
<div class="a t" style="left:250px;top:175px;font:12px/20px 'Liberation Sans',sans-serif;color:#000;">DBF´s</div>
<div class="a tab" style="left:96px;top:194px;width:104px;height:21px;"></div>
<div class="a t" style="left:114px;top:195px;font:12px/20px 'Liberation Sans',sans-serif;color:#000;letter-spacing:0.286px;">Formulários</div>
<div class="a tab" style="left:201px;top:194px;width:91px;height:21px;"></div>
<div class="a t" style="left:220px;top:195px;font:12px/20px 'Liberation Sans',sans-serif;color:#000;letter-spacing:0.352px;">Recursos</div>
<div class="a pane" style="left:6px;top:214px;width:288px;height:163px;"></div>
<div class="a tabsel" style="left:6px;top:192px;width:91px;height:23px;"></div>
<div class="a t" style="left:27.4px;top:193px;font:12px/20px 'Liberation Sans',sans-serif;color:#000;letter-spacing:0.063px;">Módulos</div>
<div class="a lv" style="left:11px;top:219px;width:278px;height:154px;"></div>
<div class="a " style="left:13px;top:221px;width:257px;height:15px;background:#316ac5"></div>
<div class="a t" style="left:15px;top:219px;font:12px/20px 'Liberation Sans',sans-serif;color:#fff;letter-spacing:0.061px;">Demo2.Prg (Main)</div>
<div class="a " style="left:271px;top:221px;width:17px;height:151px;background:#f6f5ef"></div>
<div class="a " style="left:271px;top:222px;width:16px;height:16px;border:1px solid #e5e2d4;border-radius:2px;background:#f1efe6;box-shadow:inset -1px -1px 0 #ddd9ca"><svg class="a" style="left:-1px;top:-1px" width="16" height="16"><path d="M4 9.5L8 5.5L12 9.5" fill="none" stroke="#c9c7ba" stroke-width="2"/></svg></div>
<div class="a " style="left:271px;top:354px;width:16px;height:16px;border:1px solid #e5e2d4;border-radius:2px;background:#f1efe6;box-shadow:inset -1px -1px 0 #ddd9ca"><svg class="a" style="left:-1px;top:-1px" width="16" height="16"><path d="M4 6.5L8 10.5L12 6.5" fill="none" stroke="#c9c7ba" stroke-width="2"/></svg></div>
<div class="a " style="left:0px;top:384px;width:302px;height:345px;background:#7079d6;border-radius:7px 7px 0 0"></div>
<div class="a tb" style="left:0px;top:384px;width:302px;height:29px;border-radius:7px 7px 0 0"></div>
<div class="a " style="left:0px;top:413px;width:3px;height:313px;background:linear-gradient(90deg,#6f83da,#7c86de)"></div>
<div class="a " style="left:299px;top:413px;width:3px;height:313px;background:linear-gradient(90deg,#7276d5,#6a6dcf)"></div>
<div class="a " style="left:3px;top:413px;width:296px;height:313px;background:#ece9d8"></div>
<div class="a " style="left:0px;top:726px;width:302px;height:3px;background:linear-gradient(180deg,#7b85dd,#6c6fd0 60%,#6a6bcb)"></div>
<div class="a t" style="left:6.5px;top:391px;font:bold 13.5px/20px 'Liberation Sans',sans-serif;color:#d4ddf5;letter-spacing:-0.232px;">Gerenciador de Objetos []</div>
<div class="a " style="left:6px;top:416px;width:290px;height:23px;border:1px solid #7f9db9;background:#fff"></div>
<div class="a " style="left:279px;top:418px;width:15px;height:19px;border:1px solid #b8c8f6;border-radius:2px;background:linear-gradient(135deg,#dbe5fd,#c2d3fc 60%,#b4c6f6)"><svg class="a" style="left:-1px;top:-1px" width="15" height="19"><path d="M3.5 7.5L7.5 11.5L11.5 7.5" fill="none" stroke="#4d6185" stroke-width="2"/></svg></div>
<div class="a tab" style="left:96px;top:444px;width:53px;height:21px;"></div>
<div class="a t" style="left:101.5px;top:445px;font:12px/20px 'Liberation Sans',sans-serif;color:#000;letter-spacing:-0.051px;">Eventos</div>
<div class="a pane" style="left:6px;top:464px;width:288px;height:256px;"></div>
<div class="a tabsel" style="left:6px;top:442px;width:91px;height:23px;"></div>
<div class="a t" style="left:14.4px;top:443px;font:12px/20px 'Liberation Sans',sans-serif;color:#000;letter-spacing:0.184px;">Propriedades</div>
<div class="a lv" style="left:11px;top:469px;width:278px;height:248px;"></div>
<div class="a " style="left:12px;top:470px;width:276px;height:20px;background:linear-gradient(180deg,#ebeadb 0,#ebeadb 80%,#dedbc9 88%,#cbc7b8 100%)"></div>
<div class="a t" style="left:22px;top:471px;font:12px/20px 'Liberation Sans',sans-serif;color:#000;letter-spacing:0.192px;">Propriedade</div>
<div class="a t" style="left:146px;top:471px;font:12px/20px 'Liberation Sans',sans-serif;color:#000;letter-spacing:0.375px;">Valor</div>
<div class="a " style="left:136px;top:473px;width:1px;height:14px;background:#c7c5b2"></div>
<div class="a " style="left:137px;top:473px;width:1px;height:14px;background:#fff"></div>
<div class="a " style="left:258px;top:473px;width:1px;height:14px;background:#c7c5b2"></div>
<div class="a " style="left:259px;top:473px;width:1px;height:14px;background:#fff"></div>
<div class="a " style="left:12px;top:506px;width:276px;height:1px;background:#f1efe2"></div>
<div class="a " style="left:12px;top:522px;width:276px;height:1px;background:#f1efe2"></div>
<div class="a " style="left:12px;top:538px;width:276px;height:1px;background:#f1efe2"></div>
<div class="a " style="left:12px;top:554px;width:276px;height:1px;background:#f1efe2"></div>
<div class="a " style="left:12px;top:570px;width:276px;height:1px;background:#f1efe2"></div>
<div class="a " style="left:12px;top:586px;width:276px;height:1px;background:#f1efe2"></div>
<div class="a " style="left:12px;top:602px;width:276px;height:1px;background:#f1efe2"></div>
<div class="a " style="left:12px;top:618px;width:276px;height:1px;background:#f1efe2"></div>
<div class="a " style="left:12px;top:634px;width:276px;height:1px;background:#f1efe2"></div>
<div class="a " style="left:12px;top:650px;width:276px;height:1px;background:#f1efe2"></div>
<div class="a " style="left:12px;top:666px;width:276px;height:1px;background:#f1efe2"></div>
<div class="a " style="left:12px;top:682px;width:276px;height:1px;background:#f1efe2"></div>
<div class="a " style="left:12px;top:698px;width:276px;height:1px;background:#f1efe2"></div>
<div class="a " style="left:12px;top:714px;width:276px;height:1px;background:#f1efe2"></div>
<div class="a " style="left:138px;top:491px;width:1px;height:225px;background:#f1efe2"></div>
<div class="a " style="left:260px;top:491px;width:1px;height:225px;background:#f1efe2"></div>
<div class="a " style="left:302px;top:140px;width:726px;height:594px;background:#7079d6;border-radius:7px 7px 0 0"></div>
<div class="a tb" style="left:302px;top:140px;width:726px;height:28px;border-radius:7px 7px 0 0"></div>
<div class="a " style="left:302px;top:168px;width:4px;height:562px;background:linear-gradient(90deg,#6f83da,#7c86de)"></div>
<div class="a " style="left:1022px;top:168px;width:2px;height:562px;background:#7080da"></div>
<div class="a " style="left:306px;top:168px;width:716px;height:562px;background:#ece9d8"></div>
<div class="a " style="left:302px;top:730px;width:726px;height:4px;background:linear-gradient(180deg,#7b85dd,#6c6fd0 60%,#6a6bcb)"></div>
<svg class="a" style="left:308px;top:146px" width="16" height="16" viewBox="0 0 16 16"><path d="M.5 .5H9.500L12.500 3.500V15.500H.5Z" fill="#fff" stroke="#6a6a6a" stroke-width="1"/><path d="M2.500 .5V2M4.500 .5V2M6.500 .5V2" stroke="#777"/><path d="M9.500 .5V3.500H12.500" fill="#e8e8e8" stroke="#6a6a6a" stroke-width=".8"/><rect x="2" y="6" width="9" height="8" fill="#9bd83c"/><rect x="2" y="6" width="9" height="2" fill="#dcea70"/><rect x="2" y="10.500" width="9" height="2.500" fill="#4caa22"/><rect x="2" y="12.800" width="9" height="1.200" fill="#064"/><path d="M8.500 13L14.200 3" stroke="#f5a800" stroke-width="2.300"/><path d="M8 14L8.300 12.300L9.600 13.100Z" fill="#333"/><rect x="14" y=".2" width="2" height="2.200" fill="#b0101c"/></svg>
<div class="a t" style="left:328px;top:146px;font:bold 13.5px/20px 'Liberation Sans',sans-serif;color:#d4ddf5;letter-spacing:-0.376px;">C:\Fontes\HMG\Coords\Demo2.Prg - Notepad++</div>
<div class="a " style="left:954px;top:145px;width:21px;height:21px;background:linear-gradient(135deg,#5b7be4 0,#4262d6 55%,#3a5ad0 100%);border:1px solid #c9d5f5;border-radius:3px"><div class="a" style="left:4px;top:12px;width:8px;height:3px;background:#fff"></div></div>
<div class="a " style="left:977px;top:145px;width:21px;height:21px;background:linear-gradient(135deg,#5b7be4 0,#4262d6 55%,#3a5ad0 100%);border:1px solid #c9d5f5;border-radius:3px"><div class="a" style="left:4px;top:4px;width:11px;height:10px;border:1px solid #fff;border-top:3px solid #fff"></div></div>
<div class="a " style="left:1000px;top:145px;width:21px;height:21px;background:linear-gradient(135deg,#bf7088 0,#b05c76 60%,#a9566f 100%);border:1px solid #d9b4c6;border-radius:3px"><svg class="a" style="left:0;top:0" width="19" height="19"><path d="M4.5 4.5 L14.5 14.5 M14.5 4.5 L4.5 14.5" stroke="#fff" stroke-width="2.3" stroke-linecap="butt"/></svg></div>
<div class="a t" style="left:311.6px;top:167px;font:11px/20px 'Liberation Sans',sans-serif;color:#aca899;letter-spacing:-0.509px;">File</div>
<div class="a t" style="left:339.4px;top:167px;font:11px/20px 'Liberation Sans',sans-serif;color:#aca899;letter-spacing:-0.342px;">Edit</div>
<div class="a t" style="left:369.6px;top:167px;font:11px/20px 'Liberation Sans',sans-serif;color:#aca899;letter-spacing:-0.410px;">Search</div>
<div class="a t" style="left:414.3px;top:167px;font:11px/20px 'Liberation Sans',sans-serif;color:#aca899;letter-spacing:-0.639px;">View</div>
<div class="a t" style="left:448.4px;top:167px;font:11px/20px 'Liberation Sans',sans-serif;color:#aca899;letter-spacing:-0.409px;">Encoding</div>
<div class="a t" style="left:503.2px;top:167px;font:11px/20px 'Liberation Sans',sans-serif;color:#aca899;letter-spacing:-0.232px;">Language</div>
<div class="a t" style="left:563px;top:167px;font:11px/20px 'Liberation Sans',sans-serif;color:#aca899;letter-spacing:-0.181px;">Settings</div>
<div class="a t" style="left:613.6px;top:167px;font:11px/20px 'Liberation Sans',sans-serif;color:#aca899;letter-spacing:-0.433px;">Macro</div>
<div class="a t" style="left:654.7px;top:167px;font:11px/20px 'Liberation Sans',sans-serif;color:#aca899;letter-spacing:-0.562px;">Run</div>
<div class="a t" style="left:685.6px;top:167px;font:11px/20px 'Liberation Sans',sans-serif;color:#aca899;letter-spacing:-0.525px;">Plugins</div>
<div class="a t" style="left:731px;top:167px;font:11px/20px 'Liberation Sans',sans-serif;color:#aca899;letter-spacing:-0.288px;">Window</div>
<div class="a t" style="left:780.2px;top:167px;font:11px/20px 'Liberation Sans',sans-serif;color:#aca899;letter-spacing:-0.025px;">?</div>
<div class="a t" style="left:1009px;top:167px;font:11px/20px 'Liberation Sans',sans-serif;color:#aca899;letter-spacing:-0.044px;">X</div>
<div class="a " style="left:306px;top:187px;width:716px;height:29px;background:linear-gradient(180deg,#fafaf5 0,#f3f2ea 40%,#e9e7da 85%,#d8d4c4 100%)"></div>
<div class="a " style="left:306px;top:216px;width:716px;height:1px;background:#e4e1d2"></div>
<div class="a " style="left:311px;top:193px;width:1px;height:1px;background:#a0a08c;box-shadow:1px 1px 0 #fff"></div>
<div class="a " style="left:311px;top:196px;width:1px;height:1px;background:#a0a08c;box-shadow:1px 1px 0 #fff"></div>
<div class="a " style="left:311px;top:199px;width:1px;height:1px;background:#a0a08c;box-shadow:1px 1px 0 #fff"></div>
<div class="a " style="left:311px;top:202px;width:1px;height:1px;background:#a0a08c;box-shadow:1px 1px 0 #fff"></div>
<div class="a " style="left:311px;top:205px;width:1px;height:1px;background:#a0a08c;box-shadow:1px 1px 0 #fff"></div>
<div class="a " style="left:311px;top:208px;width:1px;height:1px;background:#a0a08c;box-shadow:1px 1px 0 #fff"></div>
<div class="a " style="left:311px;top:211px;width:1px;height:1px;background:#a0a08c;box-shadow:1px 1px 0 #fff"></div>
<div class="a " style="left:826px;top:189px;width:23px;height:23px;border:1px solid #316ac5;border-radius:3px;background:#fdfdfe"></div>
<svg class="a" style="left:322px;top:191px" width="16" height="16" viewBox="0 0 16 16"><path d="M1.500 .5H8.500L12.500 4.500V15.500H1.500Z" fill="#fefefe" stroke="#c8c8c8"/><circle cx="11.500" cy="12" r="3.600" fill="#3aa33a" stroke="#1e7a1e" stroke-width=".8"/><path d="M11.500 9.800V14.200M9.300 12H13.700" stroke="#fff" stroke-width="1.500"/></svg>
<svg class="a" style="left:345px;top:191px" width="16" height="16" viewBox="0 0 16 16"><path d="M6.500 .5H12.500L15.500 3.500V9H6.500Z" fill="#cfe0fa" stroke="#5a8ad6"/><path d="M.5 15.500V5.500H5L6.500 7.500H13.500V15.500Z" fill="#f9c768" stroke="#d48a20"/><path d="M.5 15.500L2.500 9.500H15L13.500 15.500Z" fill="#fde0a0" stroke="#d48a20"/></svg>
<svg class="a" style="left:368px;top:191px" width="16" height="16" viewBox="0 0 16 16"><rect x="1" y="1" width="15" height="15" fill="#aca899"/><rect x="4" y="2" width="9" height="5" fill="#f0efe6"/><rect x="10" y="3" width="2" height="3" fill="#aca899"/><rect x="4" y="10" width="9" height="4" fill="#f0efe6" stroke="#aca899" stroke-width="0"/><rect x="5" y="11" width="7" height="2" fill="none" stroke="#aca899" stroke-width=".8"/></svg>
<svg class="a" style="left:391px;top:191px" width="16" height="16" viewBox="0 0 16 16"><rect x="1.0" y="1.0" width="9.500" height="9.500" fill="#aca899" stroke="#f0efe6" stroke-width=".7"/><rect x="3.5" y="3.5" width="9.500" height="9.500" fill="#aca899" stroke="#f0efe6" stroke-width=".7"/><rect x="6.0" y="6.0" width="9.500" height="9.500" fill="#aca899" stroke="#f0efe6" stroke-width=".7"/><rect x="8" y="7" width="5" height="2.500" fill="#f0efe6"/></svg>
<svg class="a" style="left:414px;top:191px" width="16" height="16" viewBox="0 0 16 16"><path d="M2.500 .5H9.500L13.500 4.500V15.500H2.500Z" fill="#fefefe" stroke="#c0c0c0"/><rect x="4.500" y="4" width="6" height="1" fill="#a8a8a8"/><rect x="4.500" y="6" width="6" height="1" fill="#a8a8a8"/><rect x="4.500" y="8" width="6" height="1" fill="#a8a8a8"/><rect x="4.500" y="10" width="6" height="1" fill="#a8a8a8"/><circle cx="12" cy="12" r="3.500" fill="#e8601c" stroke="#b8400c" stroke-width=".7"/><rect x="9.800" y="11.200" width="4.400" height="1.600" fill="#fff"/></svg>
<svg class="a" style="left:437px;top:191px" width="16" height="16" viewBox="0 0 16 16"><path d="M.5 1.500H6L8.500 4V11.500H.5Z" fill="#fafafa" stroke="#c0c0c0"/><path d="M3.500 3.500H9L11.500 6V13.500H3.500Z" fill="#fafafa" stroke="#c0c0c0"/><path d="M6.500 5.500H11L13.500 8V15.500H6.500Z" fill="#fefefe" stroke="#c0c0c0"/><circle cx="12.500" cy="12" r="3.400" fill="#e8601c" stroke="#b8400c" stroke-width=".7"/><rect x="10.400" y="11.200" width="4.200" height="1.600" fill="#fff"/></svg>
<svg class="a" style="left:460px;top:191px" width="16" height="16" viewBox="0 0 16 16"><path d="M4 .5H10.500L12.500 2.500V7H4Z" fill="#d8e6fb" stroke="#5a8ad6"/><rect x=".7" y="6.500" width="15" height="7" rx="2" fill="#b9b9b9" stroke="#6f6f6f"/><rect x="3.500" y="10.500" width="9.500" height="5" fill="#e6effc" stroke="#5a8ad6"/><rect x="2" y="8" width="12.500" height="1.200" fill="#e8e8e8"/></svg>
<svg class="a" style="left:491px;top:191px" width="16" height="16" viewBox="0 0 16 16"><path d="M9.500 1L7 10M5.500 3.500L11 10.500" stroke="#aca899" stroke-width="2" fill="none"/><circle cx="5" cy="12.500" r="2.200" fill="none" stroke="#aca899" stroke-width="1.800"/><circle cx="11" cy="12.500" r="2.200" fill="none" stroke="#aca899" stroke-width="1.800"/></svg>
<svg class="a" style="left:514px;top:191px" width="16" height="16" viewBox="0 0 16 16"><path d="M1.500 1.500H6.500L8.500 3.500V10.500H1.500Z" fill="#f0efe6" stroke="#aca899" stroke-width="1.200"/><path d="M6.500 5.500H12L14.500 8V15H6.500Z" fill="#aca899" stroke="#f0efe6" stroke-width="1"/></svg>
<svg class="a" style="left:537px;top:191px" width="16" height="16" viewBox="0 0 16 16"><rect x=".8" y="2" width="11" height="13" rx="1.500" fill="#c98a48" stroke="#9a6224"/><rect x="3.500" y=".8" width="5.500" height="3" rx="1" fill="#d9a060" stroke="#9a6224" stroke-width=".8"/><path d="M6.500 6.500H12L15.500 9.500V15.500H6.500Z" fill="#dfeafc" stroke="#5a8ad6"/></svg>
<svg class="a" style="left:568px;top:191px" width="16" height="16" viewBox="0 0 16 16"><path d="M3 4H10A4 4 0 0 1 10 12H6" fill="none" stroke="#4aa83a" stroke-width="3.400"/><path d="M.5 12L7 7.500V16.500Z" fill="#4aa83a"/></svg>
<svg class="a" style="left:591px;top:191px" width="16" height="16" viewBox="0 0 16 16"><path d="M10 5.500H6A3.600 3.600 0 0 0 6 12.700H12" fill="none" stroke="#aca899" stroke-width="3.400"/><path d="M15.800 5.500L9 1V10Z" fill="#aca899"/></svg>
<svg class="a" style="left:622px;top:191px" width="16" height="16" viewBox="0 0 16 16"><rect x="1" y="5" width="6" height="9.500" rx="1.500" fill="#3a3f48"/><rect x="9" y="5" width="6" height="9.500" rx="1.500" fill="#3a3f48"/><rect x="2.500" y="2" width="3.500" height="4" fill="#2a2e36"/><rect x="10" y="2" width="3.500" height="4" fill="#2a2e36"/><rect x="6" y="6" width="4" height="4" fill="#555a66"/><rect x="2" y="11" width="4" height="2.500" fill="#9aa0ac"/><rect x="10" y="11" width="4" height="2.500" fill="#9aa0ac"/></svg>
<svg class="a" style="left:645px;top:191px" width="16" height="16" viewBox="0 0 16 16"><text x="0" y="8" font-family="Liberation Sans,sans-serif" font-weight="bold" font-style="italic" font-size="10" fill="#3a78d8">b</text><text x="9" y="15.500" font-family="Liberation Sans,sans-serif" font-weight="bold" font-style="italic" font-size="11" fill="#3a78d8">a</text><path d="M4.500 7.500L10.500 11.500M10.500 11.500H7.500M10.500 11.500V8.800" stroke="#3c9a5a" stroke-width="1.400" fill="none"/></svg>
<svg class="a" style="left:676px;top:191px" width="16" height="16" viewBox="0 0 16 16"><path d="M8.500 9.500L13 14.500" stroke="#c08040" stroke-width="2.600" stroke-linecap="round"/><circle cx="6" cy="6" r="5" fill="#cfe3fb" stroke="#86acd8" stroke-width="1.200"/><path d="M9.500 3.500V10.500M6 7H13" stroke="#2f9a3a" stroke-width="2.400"/></svg>
<svg class="a" style="left:699px;top:191px" width="16" height="16" viewBox="0 0 16 16"><path d="M8.500 9.500L13 14.500" stroke="#c08040" stroke-width="2.600" stroke-linecap="round"/><circle cx="6" cy="6" r="5" fill="#cfe3fb" stroke="#86acd8" stroke-width="1.200"/><rect x="7" y="5.500" width="7" height="2.600" fill="#e02030"/></svg>
<svg class="a" style="left:730px;top:191px" width="16" height="16" viewBox="0 0 16 16"><rect x=".5" y=".5" width="14" height="12" fill="#fff" stroke="#5a8ad6"/><rect x=".5" y=".5" width="14" height="2.500" fill="#8ab0ea"/><path d="M6.500 3V12.500" stroke="#5a8ad6"/><path d="M9 9V7A2.500 2.500 0 0 1 14 7V9" fill="none" stroke="#9a9a9a" stroke-width="1.500"/><rect x="7" y="9" width="9" height="7" fill="#f0c040" stroke="#c08a10" stroke-width=".8"/><rect x="7.500" y="11.500" width="8" height="1" fill="#fae090"/></svg>
<svg class="a" style="left:753px;top:191px" width="16" height="16" viewBox="0 0 16 16"><rect x=".5" y=".5" width="14" height="12" fill="#fff" stroke="#5a8ad6"/><rect x=".5" y=".5" width="14" height="2.500" fill="#8ab0ea"/><path d="M.5 7.500H14.500" stroke="#5a8ad6"/><path d="M9 9V7A2.500 2.500 0 0 1 14 7V9" fill="none" stroke="#9a9a9a" stroke-width="1.500"/><rect x="7" y="9" width="9" height="7" fill="#f0c040" stroke="#c08a10" stroke-width=".8"/><rect x="7.500" y="11.500" width="8" height="1" fill="#fae090"/></svg>
<svg class="a" style="left:784px;top:191px" width="16" height="16" viewBox="0 0 16 16"><rect x="0" y="2" width="9" height="1.300" fill="#111"/><rect x="0" y="5" width="9" height="1.300" fill="#111"/><rect x="0" y="8" width="7" height="1.300" fill="#111"/><rect x="0" y="11.500" width="10" height="2.600" fill="#6a9ee8"/><path d="M9 8.500H15.500V13H12" fill="none" stroke="#3a78d8" stroke-width="1.200"/><path d="M10.500 13L13 11V15Z" fill="#3a78d8"/></svg>
<svg class="a" style="left:807px;top:191px" width="16" height="16" viewBox="0 0 16 16"><text x="3" y="14.500" font-family="Liberation Sans,sans-serif" font-weight="bold" font-size="17" fill="#5a94ea">¶</text></svg>
<svg class="a" style="left:830px;top:191px" width="16" height="16" viewBox="0 0 16 16"><rect x="3" y="1" width="12" height="1.600" fill="#2f6fd8"/><rect x="6" y="4" width="9" height="1.600" fill="#2f6fd8"/><rect x="6" y="7" width="8" height="1.600" fill="#2f6fd8"/><rect x="6" y="10" width="6" height="1.600" fill="#2f6fd8"/><rect x="3" y="13" width="9" height="1.600" fill="#2f6fd8"/><rect x="4" y="3" width="1" height="1" fill="#e02020"/><rect x="4" y="5" width="1" height="1" fill="#e02020"/><rect x="4" y="7" width="1" height="1" fill="#e02020"/><rect x="4" y="9" width="1" height="1" fill="#e02020"/><rect x="4" y="11" width="1" height="1" fill="#e02020"/></svg>
<svg class="a" style="left:853px;top:191px" width="16" height="16" viewBox="0 0 16 16"><rect x=".5" y="1.500" width="15" height="12" fill="#dce8fb" stroke="#5a8ad6"/><rect x=".5" y="1.500" width="15" height="2.500" fill="#8ab0ea"/><path d="M9.500 4.500L4 9.500H8L5.500 14L13 8H8.500L11.500 4.500Z" fill="#f4c430" stroke="#c89a10" stroke-width=".6"/></svg>
<svg class="a" style="left:876px;top:191px" width="16" height="16" viewBox="0 0 16 16"><rect x=".5" y=".5" width="15" height="15" fill="#b8d88a" stroke="#555"/><rect x="8" y="1" width="7" height="6" fill="#9cc0ea"/><rect x="1" y="9" width="6" height="6" fill="#e8d070"/><path d="M3 1L13 15M1 7H15" stroke="#d84a4a" stroke-width="1.200" fill="none"/></svg>
<svg class="a" style="left:899px;top:191px" width="16" height="16" viewBox="0 0 16 16"><path d="M5.500 1.500H11.500L14.500 4.500V15.500H5.500Z" fill="#fdfdfd" stroke="#a0a0a0"/><text x="0" y="13.500" font-family="Liberation Serif,serif" font-style="italic" font-weight="bold" font-size="18" fill="#d8202c">f</text><text x="8" y="13" font-family="Liberation Mono,monospace" font-size="7" fill="#888">{}</text></svg>
<svg class="a" style="left:930px;top:191px" width="16" height="16" viewBox="0 0 16 16"><rect x=".5" y="1.500" width="12" height="12" fill="#f2f0e6" stroke="#b4b2a2"/><path d="M.5 13.500V1.500H12.500" fill="none" stroke="#8a8878"/><circle cx="6.500" cy="7.500" r="3.200" fill="#c00010"/></svg>
<svg class="a" style="left:953px;top:191px" width="16" height="16" viewBox="0 0 16 16"><rect x=".5" y="1.500" width="12" height="12" fill="#f2f0e6" stroke="#b4b2a2"/><path d="M.5 13.500V1.500H12.500" fill="none" stroke="#8a8878"/><rect x="3.500" y="4.500" width="6" height="6" fill="#000"/></svg>
<svg class="a" style="left:976px;top:191px" width="16" height="16" viewBox="0 0 16 16"><rect x=".5" y="1.500" width="12" height="12" fill="#f2f0e6" stroke="#b4b2a2"/><path d="M.5 13.500V1.500H12.500" fill="none" stroke="#8a8878"/><path d="M4.500 3.500V11.500L10 7.500Z" fill="#3a78e8"/></svg>
<div class="a " style="left:483px;top:190px;width:1px;height:20px;background:#c5c2b0"></div>
<div class="a " style="left:484px;top:190px;width:1px;height:20px;background:#fff"></div>
<div class="a " style="left:560px;top:190px;width:1px;height:20px;background:#c5c2b0"></div>
<div class="a " style="left:561px;top:190px;width:1px;height:20px;background:#fff"></div>
<div class="a " style="left:614px;top:190px;width:1px;height:20px;background:#c5c2b0"></div>
<div class="a " style="left:615px;top:190px;width:1px;height:20px;background:#fff"></div>
<div class="a " style="left:668px;top:190px;width:1px;height:20px;background:#c5c2b0"></div>
<div class="a " style="left:669px;top:190px;width:1px;height:20px;background:#fff"></div>
<div class="a " style="left:722px;top:190px;width:1px;height:20px;background:#c5c2b0"></div>
<div class="a " style="left:723px;top:190px;width:1px;height:20px;background:#fff"></div>
<div class="a " style="left:776px;top:190px;width:1px;height:20px;background:#c5c2b0"></div>
<div class="a " style="left:777px;top:190px;width:1px;height:20px;background:#fff"></div>
<div class="a " style="left:922px;top:190px;width:1px;height:20px;background:#c5c2b0"></div>
<div class="a " style="left:923px;top:190px;width:1px;height:20px;background:#fff"></div>
<div class="a t" style="left:1009px;top:184px;font:bold 14px/20px 'Liberation Sans',sans-serif;color:#000;letter-spacing:0.203px;">»</div>
<div class="a " style="left:306px;top:217px;width:716px;height:22px;background:#ece9d8"></div>
<div class="a ntab" style="left:308px;top:218px;width:94px;height:19px;"></div>
<svg class="a" style="left:313px;top:223px" width="13" height="13" viewBox="0 0 13 13"><rect x=".5" y=".5" width="12" height="12" rx="1" fill="#7aa8e8" stroke="#2f6fc8"/><rect x="3" y="1" width="6" height="3.500" fill="#dbe8fb"/><rect x="2" y="6" width="9" height="2" fill="#2f6fc8"/><rect x="2" y="8" width="9" height="4" fill="#e4eefc"/><rect x="3" y="9.500" width="7" height="1.500" fill="#3c9a6a"/></svg>
<div class="a t" style="left:331.6px;top:220px;font:11px/20px 'Liberation Sans',sans-serif;color:#808080;letter-spacing:-0.118px;">c_monthcal.c</div>
<div class="a ntab" style="left:403px;top:218px;width:112px;height:19px;"></div>
<svg class="a" style="left:408px;top:223px" width="13" height="13" viewBox="0 0 13 13"><rect x=".5" y=".5" width="12" height="12" rx="1" fill="#7aa8e8" stroke="#2f6fc8"/><rect x="3" y="1" width="6" height="3.500" fill="#dbe8fb"/><rect x="2" y="6" width="9" height="2" fill="#2f6fc8"/><rect x="2" y="8" width="9" height="4" fill="#e4eefc"/><rect x="3" y="9.500" width="7" height="1.500" fill="#3c9a6a"/></svg>
<div class="a t" style="left:426.6px;top:220px;font:11px/20px 'Liberation Sans',sans-serif;color:#808080;letter-spacing:-0.202px;">h_controlmisc.prg</div>
<div class="a ntab" style="left:517px;top:218px;width:75px;height:19px;"></div>
<svg class="a" style="left:522.5px;top:223px" width="13" height="13" viewBox="0 0 13 13"><rect x=".5" y=".5" width="12" height="12" rx="1" fill="#7aa8e8" stroke="#2f6fc8"/><rect x="3" y="1" width="6" height="3.500" fill="#dbe8fb"/><rect x="2" y="6" width="9" height="2" fill="#2f6fc8"/><rect x="2" y="8" width="9" height="4" fill="#e4eefc"/><rect x="3" y="9.500" width="7" height="1.500" fill="#3c9a6a"/></svg>
<div class="a t" style="left:541px;top:220px;font:11px/20px 'Liberation Sans',sans-serif;color:#808080;letter-spacing:-0.220px;">h_tab.prg</div>
<div class="a ntab" style="left:594px;top:218px;width:76px;height:19px;"></div>
<svg class="a" style="left:599px;top:223px" width="13" height="13" viewBox="0 0 13 13"><rect x=".5" y=".5" width="12" height="12" rx="1" fill="#7aa8e8" stroke="#2f6fc8"/><rect x="3" y="1" width="6" height="3.500" fill="#dbe8fb"/><rect x="2" y="6" width="9" height="2" fill="#2f6fc8"/><rect x="2" y="8" width="9" height="4" fill="#e4eefc"/><rect x="3" y="9.500" width="7" height="1.500" fill="#3c9a6a"/></svg>
<div class="a t" style="left:617.5px;top:220px;font:11px/20px 'Liberation Sans',sans-serif;color:#808080;letter-spacing:-0.150px;">c_menu.c</div>
<div class="a ntab" style="left:672px;top:218px;width:73px;height:19px;"></div>
<svg class="a" style="left:678px;top:223px" width="13" height="13" viewBox="0 0 13 13"><rect x=".5" y=".5" width="12" height="12" rx="1" fill="#7aa8e8" stroke="#2f6fc8"/><rect x="3" y="1" width="6" height="3.500" fill="#dbe8fb"/><rect x="2" y="6" width="9" height="2" fill="#2f6fc8"/><rect x="2" y="8" width="9" height="4" fill="#e4eefc"/><rect x="3" y="9.500" width="7" height="1.500" fill="#3c9a6a"/></svg>
<div class="a t" style="left:694.8px;top:220px;font:11px/20px 'Liberation Sans',sans-serif;color:#808080;letter-spacing:-0.386px;">demo.prg</div>
<div class="a " style="left:745px;top:217px;width:87px;height:22px;background:#ece9d8;border-left:1px solid #fff;border-right:2px solid #716f64;border-top:1px solid #fff"></div>
<div class="a " style="left:746px;top:218px;width:84px;height:4px;background:#ffa532"></div>
<svg class="a" style="left:750px;top:223px" width="13" height="13" viewBox="0 0 13 13"><rect x=".5" y=".5" width="12" height="12" rx="1" fill="#fff" stroke="#2f6fc8"/><rect x="1" y="1" width="11" height="3" fill="#eaf2fd"/><rect x="4" y="1.500" width="1.200" height="1.500" fill="#2f6fc8"/><rect x="2" y="5" width="9" height="2.500" fill="#5a8fd8"/><rect x="3" y="9" width="7" height="1.500" fill="#6ab84a"/></svg>
<div class="a t" style="left:771.7px;top:220px;font:11px/20px 'Liberation Sans',sans-serif;color:#000;letter-spacing:-0.338px;">Demo2.Prg</div>
<div class="a " style="left:988px;top:219px;width:34px;height:17px;background:#fff"></div>
<div class="a " style="left:989px;top:220px;width:32px;height:15px;background:linear-gradient(135deg,#c6d6fb,#b6c9f8);border-radius:2px"><svg class="a" style="left:0;top:0" width="32" height="15"><path d="M9.500 4L6 7.500L9.500 11" fill="none" stroke="#4d6185" stroke-width="2"/><path d="M21.500 4L25 7.500L21.500 11" fill="none" stroke="#4d6185" stroke-width="2"/><path d="M16.500 1V14" stroke="#d0dcfb" stroke-width="1"/></svg></div>
<div class="a " style="left:306px;top:238px;width:716px;height:2px;background:#fff"></div>
<div class="a " style="left:306px;top:238px;width:2px;height:467px;background:#fff"></div>
<div class="a " style="left:1020px;top:238px;width:2px;height:467px;background:#fff"></div>
<div class="a " style="left:308px;top:240px;width:714px;height:465px;background:#fff;border-top:1px solid #aca899;border-left:1px solid #aca899"></div>
<div class="a " style="left:309px;top:241px;width:711px;height:462px;background:#fff;border-top:1px solid #716f64;border-left:1px solid #716f64;border-right:1px solid #ece9d8;border-bottom:1px solid #ece9d8"></div>
<div class="a " style="left:306px;top:705px;width:716px;height:2px;background:linear-gradient(180deg,#8f8d7e,#cfccbb)"></div>
<div class="a " style="left:310px;top:242px;width:46px;height:444px;background:#e4e4e4"></div>
<div class="a " style="left:356px;top:242px;width:14px;height:444px;background:#f4f4f4"></div>
<div class="a " style="left:370px;top:368px;width:630px;height:18px;background:#e8e8ff"></div>
<div class="ed"><div class="ln" style="top:1px">30</div><div class="cl" style="top:1px"><b style="color:#0000ff">ACTIVATE WINDOW</b><span style="color:#800000"> Form_1</span></div><div class="ln" style="top:19px">31</div><div class="cl" style="top:19px"><b class="p" style="color:#800080">Return Nil</b></div><div class="ln" style="top:37px">32</div><div class="ln" style="top:55px">33</div><div class="cl" style="top:55px"><b class="p" style="color:#800080">Function</b> Coords()</div><div class="ln" style="top:73px">34</div><div class="cl" style="top:73px"><b style="color:#0000ff">DEFINE WINDOW</b><span style="color:#800000"> Form_Coords</span> <b class="p" style="color:#800080">AT</b> 0, <b style="color:#ff0000">0</b><b style="color:#0000ff"> WIDTH</b>  GetDesktopWidth() <b style="color:#0000ff">HEIGHT</b> GetDesktopHei</div><div class="ln" style="top:91px">35</div><div class="cl" style="top:91px">    MODAL NOSIZE NOSYSMENU <b style="color:#0000ff">NOCAPTION</b> ;</div><div class="ln" style="top:109px">36</div><div class="cl" style="top:109px"><b style="color:#0000ff">    ON INIT</b> Iniciar();</div><div class="ln" style="top:127px">37</div><div class="cl" style="top:127px"><b style="color:#0000ff">    ON RELEASE</b> <b style="color:#ff0000">(</b>BT_SCR_SHOWCURSOR(.t.),ShowWindow (<span style="color:#800000">Form_1</span>.HANDLE)<b style="color:#ff0000">)</b>;</div><div class="ln" style="top:145px">38</div><div class="cl" style="top:145px"><b style="color:#0000ff">    BACKCOLOR</b> {255,0,255}</div><div class="ln" style="top:163px">39</div><div class="ln" style="top:181px">40</div><div class="cl" style="top:181px"><b style="color:#0000ff">    ON KEY</b> CONTROL+C OF <span style="color:#800000">Form_Coords</span><b style="color:#0000ff"> ACTION</b> ChangeSTColor()</div><div class="ln" style="top:199px">41</div><div class="cl" style="top:199px"><b style="color:#0000ff">    ON KEY</b> CONTROL+R OF <span style="color:#800000">Form_Coords</span><b style="color:#0000ff"> ACTION</b> SRand()</div><div class="ln" style="top:217px">42</div><div class="cl" style="top:217px"><b style="color:#0000ff">    ON KEY</b> ESCAPE <b style="color:#0000ff">ACTION</b> ThisWindow.Release()</div><div class="ln" style="top:235px">43</div><div class="ln" style="top:253px">44</div><div class="cl" style="top:253px"><b style="color:#0000ff">    DEFINE LABEL</b> _Row</div><div class="ln" style="top:271px">45</div><div class="cl" style="top:271px"><b style="color:#0000ff">        ROW</b>    <b style="color:#ff0000">300</b></div><div class="ln" style="top:289px">46</div><div class="cl" style="top:289px"><b style="color:#0000ff">        COL</b>    <b style="color:#ff0000">0</b></div><div class="ln" style="top:307px">47</div><div class="cl" style="top:307px"><b style="color:#0000ff">        WIDTH</b>  <b style="color:#ff0000">1600</b></div><div class="ln" style="top:325px">48</div><div class="cl" style="top:325px"><b style="color:#0000ff">        HEIGHT</b> <b style="color:#ff0000">1</b></div><div class="ln" style="top:343px">49</div><div class="cl" style="top:343px"><b style="color:#0000ff">        VALUE</b> <i style="color:#000">""</i></div><div class="ln" style="top:361px">50</div><div class="cl" style="top:361px">        FONTNAME <i style="color:#000">"</i>Arial<i style="color:#000">"</i></div><div class="ln" style="top:379px">51</div><div class="cl" style="top:379px">        FONTSIZE <b style="color:#ff0000">9</b></div><div class="ln" style="top:397px">52</div><div class="cl" style="top:397px"><b style="color:#0000ff">        TOOLTIP</b> <i style="color:#000">""</i></div><div class="ln" style="top:415px">53</div><div class="cl" style="top:415px">        FONTBOLD .T.</div><div class="ln" style="top:433px">54</div><div class="cl" style="top:433px">        FONTITALIC .F.</div><div class="a" style="left:53px;top:0;width:1px;height:126px;background:#808080"></div><div class="a" style="left:53px;top:126px;width:1px;height:318px;background:#ff0000"></div><div class="a" style="left:48px;top:4px;width:11px;height:11px;border:1px solid #808080;background:#fff"><div class="a" style="left:2px;top:4px;width:5px;height:1px;background:#808080"></div></div><div class="a" style="left:48px;top:76px;width:11px;height:11px;border:1px solid #808080;background:#fff"><div class="a" style="left:2px;top:4px;width:5px;height:1px;background:#808080"></div></div><div class="a" style="left:48px;top:130px;width:11px;height:11px;border:1px solid #ff0000;background:#fff"><div class="a" style="left:2px;top:4px;width:5px;height:1px;background:#ff0000"></div></div><div class="a" style="left:48px;top:184px;width:11px;height:11px;border:1px solid #ff0000;background:#fff"><div class="a" style="left:2px;top:4px;width:5px;height:1px;background:#ff0000"></div></div><div class="a" style="left:48px;top:202px;width:11px;height:11px;border:1px solid #ff0000;background:#fff"><div class="a" style="left:2px;top:4px;width:5px;height:1px;background:#ff0000"></div></div><div class="a" style="left:94px;top:271px;width:1px;height:173px;background:repeating-linear-gradient(180deg,#c0c0c0 0,#c0c0c0 1px,transparent 1px,transparent 2px)"></div></div>
<div class="a " style="left:1002px;top:242px;width:17px;height:444px;background:linear-gradient(90deg,#f3f1ec,#fefefb)"></div>
<div class="a " style="left:1002px;top:242px;width:16px;height:16px;border:1px solid #fff;border-radius:3px;background:linear-gradient(135deg,#cddafd,#b9cbf9 70%,#aebff3);box-shadow:0 1px 0 #98b0e8"><svg class="a" style="left:-1px;top:-1px" width="16" height="16"><path d="M4 9.500L7.500 6L11 9.500" fill="none" stroke="#4d6185" stroke-width="2"/></svg></div>
<div class="a " style="left:1002px;top:670px;width:16px;height:16px;border:1px solid #fff;border-radius:3px;background:linear-gradient(135deg,#cddafd,#b9cbf9 70%,#aebff3);box-shadow:0 1px 0 #98b0e8"><svg class="a" style="left:-1px;top:-1px" width="16" height="16"><path d="M4 6L7.500 9.500L11 6" fill="none" stroke="#4d6185" stroke-width="2"/></svg></div>
<div class="a " style="left:1002px;top:311px;width:16px;height:40px;border:1px solid #fff;border-radius:3px;background:linear-gradient(90deg,#c9d8fc,#bacbf8 60%,#aec0f4);box-shadow:0 1px 0 #98b0e8"><div class="a" style="left:4px;top:15px;width:6px;height:1px;background:#eef4fe;box-shadow:0 2px 0 #eef4fe,0 4px 0 #eef4fe,0 6px 0 #eef4fe,1px 1px 0 #8ca4dc,1px 3px 0 #8ca4dc,1px 5px 0 #8ca4dc,1px 7px 0 #8ca4dc"></div></div>
<div class="a " style="left:310px;top:686px;width:692px;height:17px;background:linear-gradient(180deg,#f3f1ec,#fefefb)"></div>
<div class="a " style="left:310px;top:687px;width:16px;height:16px;border:1px solid #fff;border-radius:3px;background:linear-gradient(135deg,#cddafd,#b9cbf9 70%,#aebff3);box-shadow:0 1px 0 #98b0e8"><svg class="a" style="left:-1px;top:-1px" width="16" height="16"><path d="M9.500 4L6 7.500L9.500 11" fill="none" stroke="#4d6185" stroke-width="2"/></svg></div>
<div class="a " style="left:985px;top:687px;width:16px;height:16px;border:1px solid #fff;border-radius:3px;background:linear-gradient(135deg,#cddafd,#b9cbf9 70%,#aebff3);box-shadow:0 1px 0 #98b0e8"><svg class="a" style="left:-1px;top:-1px" width="16" height="16"><path d="M6 4L9.500 7.500L6 11" fill="none" stroke="#4d6185" stroke-width="2"/></svg></div>
<div class="a " style="left:327px;top:687px;width:445px;height:16px;border:1px solid #fff;border-radius:3px;background:linear-gradient(180deg,#c9d8fc,#bacbf8 60%,#aec0f4);box-shadow:1px 0 0 #98b0e8"><div class="a" style="left:217px;top:4px;width:1px;height:6px;background:#eef4fe;box-shadow:2px 0 0 #eef4fe,4px 0 0 #eef4fe,6px 0 0 #eef4fe,1px 1px 0 #8ca4dc,3px 1px 0 #8ca4dc,5px 1px 0 #8ca4dc,7px 1px 0 #8ca4dc"></div></div>
<div class="a " style="left:1002px;top:686px;width:17px;height:17px;background:#ece9d8"></div>
<div class="a t" style="left:307.8px;top:710px;font:11px/20px 'Liberation Sans',sans-serif;color:#000;letter-spacing:0.039px;">length : 5499   lines : 233</div>
<div class="a t" style="left:485.4px;top:710px;font:11px/20px 'Liberation Sans',sans-serif;color:#000;letter-spacing:0.107px;">Ln : 37   Col : 17   Sel : 0 | 0</div>
<div class="a t" style="left:745.4px;top:710px;font:11px/20px 'Liberation Sans',sans-serif;color:#000;letter-spacing:-0.223px;">Dos\Windows</div>
<div class="a t" style="left:856px;top:710px;font:11px/20px 'Liberation Sans',sans-serif;color:#000;letter-spacing:-0.597px;">ANSI</div>
<div class="a t" style="left:975.5px;top:710px;font:11px/20px 'Liberation Sans',sans-serif;color:#000;letter-spacing:-0.681px;">INS</div>
<div class="a " style="left:480px;top:710px;width:1px;height:17px;background:#c5c2b4"></div>
<div class="a " style="left:481px;top:710px;width:1px;height:17px;background:#fff"></div>
<div class="a " style="left:740px;top:710px;width:1px;height:17px;background:#c5c2b4"></div>
<div class="a " style="left:741px;top:710px;width:1px;height:17px;background:#fff"></div>
<div class="a " style="left:850px;top:710px;width:1px;height:17px;background:#c5c2b4"></div>
<div class="a " style="left:851px;top:710px;width:1px;height:17px;background:#fff"></div>
<div class="a " style="left:970px;top:710px;width:1px;height:17px;background:#c5c2b4"></div>
<div class="a " style="left:971px;top:710px;width:1px;height:17px;background:#fff"></div>
<div class="a " style="left:1000px;top:710px;width:1px;height:17px;background:#c5c2b4"></div>
<div class="a " style="left:1001px;top:710px;width:1px;height:17px;background:#fff"></div>
<div class="a " style="left:1017px;top:716px;width:2px;height:2px;background:#b8b4a2;box-shadow:1px 1px 0 #fff"></div>
<div class="a " style="left:1013px;top:720px;width:2px;height:2px;background:#b8b4a2;box-shadow:1px 1px 0 #fff"></div>
<div class="a " style="left:1017px;top:720px;width:2px;height:2px;background:#b8b4a2;box-shadow:1px 1px 0 #fff"></div>
<div class="a " style="left:1009px;top:724px;width:2px;height:2px;background:#b8b4a2;box-shadow:1px 1px 0 #fff"></div>
<div class="a " style="left:1013px;top:724px;width:2px;height:2px;background:#b8b4a2;box-shadow:1px 1px 0 #fff"></div>
<div class="a " style="left:1017px;top:724px;width:2px;height:2px;background:#b8b4a2;box-shadow:1px 1px 0 #fff"></div>
<div class="a " style="left:0px;top:729px;width:302px;height:1px;background:#fff"></div>
<div class="a " style="left:0px;top:730px;width:302px;height:4px;background:#ece9d8"></div>
<div class="a " style="left:62px;top:729px;width:1px;height:1px;background:#000"></div>
<div class="a " style="left:83px;top:729px;width:1px;height:1px;background:#000"></div>
<div class="a " style="left:104px;top:729px;width:1px;height:1px;background:#000"></div>
<div class="a " style="left:151px;top:729px;width:1px;height:1px;background:#000"></div>
<div class="a " style="left:200px;top:729px;width:1px;height:1px;background:#000"></div>
<div class="a " style="left:0px;top:734px;width:1024px;height:34px;background:linear-gradient(180deg,#3a84ea 0,#3e8cf0 2px,#3584ea 4px,#2355cc 4px,#2c66e0 6px,#275cda 10px,#255adb 26px,#2152c8 31px,#1a40a5 100%)"></div>
<div class="a " style="left:0px;top:738px;width:109px;height:30px;border-radius:0 12px 12px 0/0 15px 15px 0;background:linear-gradient(180deg,#3c9a3c 0,#4fb34f 3px,#3f9f3f 8px,#389738 20px,#2f8a30 26px,#2a7a2a 100%);box-shadow:inset 0 2px 2px #6fc46f,inset -3px 0 4px #2a7a2a, 1px 0 2px #1a3f8f"></div>
<svg class="a" style="left:10px;top:743px" width="21" height="20" viewBox="0 0 18.5 18"><path d="M2.500 2.800C5 1.500 7 1.800 9 3L7.800 8.500C6 7.400 4 7.200 1.300 8.400Z" fill="#e8542c"/><path d="M10.200 3.400C12.500 4.600 14.500 4.500 17.500 3.300L16.200 8.800C13.500 10 11.500 10 9 8.800Z" fill="#7cc142"/><path d="M1 9.800C3.800 8.600 5.800 8.900 7.500 10L6.300 15.500C4.500 14.400 2.500 14.200 -.200 15.400Z" fill="#4a8bea"/><path d="M8.700 10.400C11 11.600 13 11.600 15.900 10.300L14.600 15.900C12 17.100 10 17.100 7.500 15.900Z" fill="#f8c428"/></svg>
<div class="a t" style="left:35px;top:743px;font:italic bold 18px/20px 'Liberation Sans',sans-serif;color:#fff;letter-spacing:-0.362px;text-shadow:1px 1px 1px #234c1f;">Iniciar</div>
<div class="a " style="left:120px;top:744px;width:2px;height:2px;background:#153fa0;box-shadow:1px 1px 0 #5b9bf5"></div>
<div class="a " style="left:122px;top:748px;width:2px;height:2px;background:#153fa0;box-shadow:1px 1px 0 #5b9bf5"></div>
<div class="a " style="left:120px;top:752px;width:2px;height:2px;background:#153fa0;box-shadow:1px 1px 0 #5b9bf5"></div>
<div class="a " style="left:122px;top:756px;width:2px;height:2px;background:#153fa0;box-shadow:1px 1px 0 #5b9bf5"></div>
<div class="a " style="left:120px;top:760px;width:2px;height:2px;background:#153fa0;box-shadow:1px 1px 0 #5b9bf5"></div>
<div class="a " style="left:246px;top:744px;width:2px;height:2px;background:#153fa0;box-shadow:1px 1px 0 #5b9bf5"></div>
<div class="a " style="left:248px;top:748px;width:2px;height:2px;background:#153fa0;box-shadow:1px 1px 0 #5b9bf5"></div>
<div class="a " style="left:246px;top:752px;width:2px;height:2px;background:#153fa0;box-shadow:1px 1px 0 #5b9bf5"></div>
<div class="a " style="left:248px;top:756px;width:2px;height:2px;background:#153fa0;box-shadow:1px 1px 0 #5b9bf5"></div>
<div class="a " style="left:246px;top:760px;width:2px;height:2px;background:#153fa0;box-shadow:1px 1px 0 #5b9bf5"></div>
<svg class="a" style="left:132px;top:745px" width="16" height="16" viewBox="0 0 16 16"><rect x="1" y="2" width="14" height="12" rx="2" fill="#f4f8ff" stroke="#3a6ad0"/><circle cx="8" cy="8" r="4" fill="#fff" stroke="#2a50b0" stroke-width="1.200"/><path d="M8 5.500V8H10" stroke="#2a50b0" fill="none"/><circle cx="13" cy="3.500" r="1.500" fill="#e83030"/></svg>
<svg class="a" style="left:155px;top:745px" width="16" height="16" viewBox="0 0 16 16"><rect x=".5" y="1.500" width="15" height="14" rx="1.500" fill="#f4f4f4" stroke="#999"/><circle cx="7" cy="7" r="4" fill="#dcecff" stroke="#777" stroke-width="1.300"/><path d="M10 10L13.500 13.500" stroke="#c87a30" stroke-width="2.200"/></svg>
<svg class="a" style="left:178px;top:745px" width="16" height="16" viewBox="0 0 16 16"><rect x="0" y="0" width="16" height="16" rx="1" fill="#f8f8fc"/><text x="8" y="11.500" text-anchor="middle" font-family="Liberation Serif,serif" font-weight="bold" font-size="17" fill="#2a5ad8">g</text></svg>
<svg class="a" style="left:201px;top:745px" width="16" height="16" viewBox="0 0 16 16"><path d="M3 2.500L14 1L15 12L5 15.500Z" fill="#9ed0e8" stroke="#4a90b8" stroke-width=".8"/><path d="M3 2.500L1.500 13L5 15.500Z" fill="#6ab0d0"/><path d="M3 2.500L14 1" stroke="#2a6a98" stroke-width="1.500" stroke-dasharray="1 1"/></svg>
<div class="a t" style="left:230px;top:738px;font:14px/20px 'Liberation Sans',sans-serif;color:#dfe9ff;letter-spacing:0.703px;">»</div>
<div class="a " style="left:258px;top:742px;width:71px;height:23px;border-radius:3px;background:linear-gradient(180deg,#5a9af8 0,#3f86f5 3px,#3a80f2 50%,#3576e8 100%);box-shadow:inset 1px 1px 0 #6aa6fa,inset -1px -1px 0 #2a62d0"></div>
<svg class="a" style="left:266px;top:745px" width="16" height="16" viewBox="0 0 16 16"><rect width="16" height="16" fill="#1fa2e6"/><rect y="11" width="16" height="5" fill="#1587c4"/><text x=".5" y="9" font-family="Liberation Sans,sans-serif" font-weight="bold" font-size="8.500" textLength="15" lengthAdjust="spacingAndGlyphs" fill="#000">HMG</text><rect x="9" y="11" width="4" height="1.400" fill="#001"/></svg>
<div class="a t" style="left:285px;top:743px;font:bold 11px/20px 'Liberation Sans',sans-serif;color:#f8c868;letter-spacing:0.375px;">2</div>
<div class="a t" style="left:296px;top:743px;font:11px/20px 'Liberation Sans',sans-serif;color:#fff;">I..</div>
<svg class="a" style="left:320px;top:752px" width="8" height="5"><path d="M0 .5H7L3.500 4.500Z" fill="#fff"/></svg>
<div class="a " style="left:331px;top:742px;width:71px;height:23px;border-radius:3px;background:linear-gradient(180deg,#5a9af8 0,#3f86f5 3px,#3a80f2 50%,#3576e8 100%);box-shadow:inset 1px 1px 0 #6aa6fa,inset -1px -1px 0 #2a62d0"></div>
<svg class="a" style="left:339px;top:745px" width="16" height="16" viewBox="0 0 16 16"><path d="M.5 .5H9.500L12.500 3.500V15.500H.5Z" fill="#fff" stroke="#6a6a6a" stroke-width="1"/><path d="M2.500 .5V2M4.500 .5V2M6.500 .5V2" stroke="#777"/><path d="M9.500 .5V3.500H12.500" fill="#e8e8e8" stroke="#6a6a6a" stroke-width=".8"/><rect x="2" y="6" width="9" height="8" fill="#9bd83c"/><rect x="2" y="6" width="9" height="2" fill="#dcea70"/><rect x="2" y="10.500" width="9" height="2.500" fill="#4caa22"/><rect x="2" y="12.800" width="9" height="1.200" fill="#064"/><path d="M8.500 13L14.200 3" stroke="#f5a800" stroke-width="2.300"/><path d="M8 14L8.300 12.300L9.600 13.100Z" fill="#333"/><rect x="14" y=".2" width="2" height="2.200" fill="#b0101c"/></svg>
<div class="a t" style="left:358px;top:743px;font:11px/20px 'Liberation Sans',sans-serif;color:#fff;">C:\...</div>
<div class="a " style="left:403px;top:742px;width:71px;height:23px;border-radius:3px;background:linear-gradient(180deg,#5a9af8 0,#3f86f5 3px,#3a80f2 50%,#3576e8 100%);box-shadow:inset 1px 1px 0 #6aa6fa,inset -1px -1px 0 #2a62d0"></div>
<svg class="a" style="left:411px;top:745px" width="16" height="16" viewBox="0 0 16 16"><path d="M.5 14.500V3.500H5L6.500 5.500H15.500V14.500Z" fill="#f8d468" stroke="#b88a20"/><rect x="1.500" y="7" width="13" height="1" fill="#fdeaa0"/></svg>
<div class="a t" style="left:430px;top:743px;font:bold 11px/20px 'Liberation Sans',sans-serif;color:#f8c868;letter-spacing:0.375px;">3</div>
<div class="a t" style="left:441px;top:743px;font:11px/20px 'Liberation Sans',sans-serif;color:#fff;">W.</div>
<svg class="a" style="left:465px;top:752px" width="8" height="5"><path d="M0 .5H7L3.500 4.500Z" fill="#fff"/></svg>
<div class="a " style="left:476px;top:742px;width:71px;height:23px;border-radius:3px;background:linear-gradient(180deg,#5a9af8 0,#3f86f5 3px,#3a80f2 50%,#3576e8 100%);box-shadow:inset 1px 1px 0 #6aa6fa,inset -1px -1px 0 #2a62d0"></div>
<svg class="a" style="left:484px;top:745px" width="16" height="16" viewBox="0 0 16 16"><rect x=".5" y="1.500" width="15" height="14" rx="1.500" fill="#f4f4f4" stroke="#999"/><circle cx="7" cy="7" r="4" fill="#dcecff" stroke="#777" stroke-width="1.300"/><path d="M10 10L13.500 13.500" stroke="#c87a30" stroke-width="2.200"/></svg>
<div class="a t" style="left:503px;top:743px;font:bold 11px/20px 'Liberation Sans',sans-serif;color:#f8c868;letter-spacing:0.375px;">2</div>
<div class="a t" style="left:514px;top:743px;font:11px/20px 'Liberation Sans',sans-serif;color:#fff;">P..</div>
<svg class="a" style="left:538px;top:752px" width="8" height="5"><path d="M0 .5H7L3.500 4.500Z" fill="#fff"/></svg>
<div class="a " style="left:549px;top:742px;width:71px;height:23px;border-radius:3px;background:linear-gradient(180deg,#5a9af8 0,#3f86f5 3px,#3a80f2 50%,#3576e8 100%);box-shadow:inset 1px 1px 0 #6aa6fa,inset -1px -1px 0 #2a62d0"></div>
<svg class="a" style="left:557px;top:745px" width="16" height="16" viewBox="0 0 16 16"><circle cx="8" cy="8" r="7.500" fill="#e8443a"/><path d="M8 8L1.500 4.200A7.500 7.500 0 0 0 5 14.900Z" fill="#3aa757"/><path d="M8 8L5 14.900A7.500 7.500 0 0 0 15.500 8Z" fill="#fbc116"/><path d="M8 8H15.500A7.500 7.500 0 0 0 14 3.500Z" fill="#e8443a"/><circle cx="8" cy="8" r="3.300" fill="#fff"/><circle cx="8" cy="8" r="2.500" fill="#4a8af4"/></svg>
<div class="a t" style="left:576px;top:743px;font:11px/20px 'Liberation Sans',sans-serif;color:#fff;">Sp...</div>
<div class="a " style="left:622px;top:742px;width:71px;height:23px;border-radius:3px;background:linear-gradient(180deg,#5a9af8 0,#3f86f5 3px,#3a80f2 50%,#3576e8 100%);box-shadow:inset 1px 1px 0 #6aa6fa,inset -1px -1px 0 #2a62d0"></div>
<svg class="a" style="left:630px;top:745px" width="16" height="16" viewBox="0 0 16 16"><path d="M3 2.500L14 1L15 12L5 15.500Z" fill="#9ed0e8" stroke="#4a90b8" stroke-width=".8"/><path d="M3 2.500L1.500 13L5 15.500Z" fill="#6ab0d0"/><path d="M3 2.500L14 1" stroke="#2a6a98" stroke-width="1.500" stroke-dasharray="1 1"/></svg>
<div class="a t" style="left:649px;top:743px;font:11px/20px 'Liberation Sans',sans-serif;color:#fff;">Se...</div>
<div class="a " style="left:695px;top:742px;width:71px;height:23px;border-radius:3px;background:linear-gradient(180deg,#5a9af8 0,#3f86f5 3px,#3a80f2 50%,#3576e8 100%);box-shadow:inset 1px 1px 0 #6aa6fa,inset -1px -1px 0 #2a62d0"></div>
<svg class="a" style="left:703px;top:745px" width="16" height="16" viewBox="0 0 16 16"><rect x=".5" y=".5" width="15" height="15" fill="#c8e4f8" stroke="#e8f0fa"/><rect x=".5" y=".5" width="15" height="3" fill="#1a3a9a"/><rect x="1" y="4" width="5" height="11.500" fill="#f4f4f4"/><path d="M6.500 4V15.500" stroke="#888"/></svg>
<div class="a t" style="left:722px;top:743px;font:11px/20px 'Liberation Sans',sans-serif;color:#fff;">FM...</div>
<div class="a " style="left:768px;top:742px;width:71px;height:23px;border-radius:3px;background:linear-gradient(180deg,#5a9af8 0,#3f86f5 3px,#3a80f2 50%,#3576e8 100%);box-shadow:inset 1px 1px 0 #6aa6fa,inset -1px -1px 0 #2a62d0"></div>
<svg class="a" style="left:776px;top:745px" width="16" height="16" viewBox="0 0 16 16"><path d="M4 8L5.500 15.500H11.500L13 8Z" fill="#8fd0a0" stroke="#3a8a5a" stroke-width=".7"/><path d="M5 1L7 9" stroke="#e84a2a" stroke-width="1.600"/><path d="M8.500 .5V9" stroke="#f0b020" stroke-width="1.600"/><path d="M12 1L10 9" stroke="#a06030" stroke-width="1.600"/><path d="M3 3L6 9" stroke="#c02020" stroke-width="1.200"/></svg>
<div class="a t" style="left:795px;top:743px;font:bold 11px/20px 'Liberation Sans',sans-serif;color:#f8c868;letter-spacing:0.375px;">2</div>
<div class="a t" style="left:806px;top:743px;font:11px/20px 'Liberation Sans',sans-serif;color:#fff;">P..</div>
<svg class="a" style="left:830px;top:752px" width="8" height="5"><path d="M0 .5H7L3.500 4.500Z" fill="#fff"/></svg>
<div class="a " style="left:859px;top:738px;width:165px;height:30px;background:linear-gradient(180deg,#18a4f0 0,#139aec 4px,#1295e9 10px,#1290e6 22px,#0f7fd6 27px,#0c66bd 100%);box-shadow:inset 1px 0 0 #0c3c98,inset 2px 0 0 #1fc4f6"></div>
<svg class="a" style="left:870px;top:745px" width="16" height="16" viewBox="0 0 16 16"><circle cx="8" cy="8" r="8" fill="#f89a1c"/><path d="M4.500 9.500A3.600 3.600 0 1 1 11.500 9.500" fill="none" stroke="#fff" stroke-width="2.400" stroke-linecap="round"/></svg>
<svg class="a" style="left:889px;top:745px" width="17" height="16" viewBox="0 0 17 16"><rect x="2.500" y="2.500" width="13" height="10" fill="#fff" stroke="#2a3a9a"/><rect x="2.500" y="2.500" width="13" height="2.500" fill="#2a4ad8"/><rect x="5" y="7" width="8" height="1" fill="#888"/><rect x="5" y="9" width="8" height="1" fill="#888"/><rect x=".5" y="9.500" width="6" height="6" fill="#b0b0b0" stroke="#222"/><path d="M2 9.500V8A1.500 1.500 0 0 1 5 8V9.500" fill="none" stroke="#222"/></svg>
<svg class="a" style="left:907px;top:745px" width="16" height="16" viewBox="0 0 16 16"><path d="M1 8L8 1.500L15 8L8 14.500Z" fill="#f4f4f4" stroke="#333"/><path d="M5 9L10 5L13 8L8 12.500Z" fill="#fff" stroke="#666" stroke-width=".7"/><rect x="9" y="10" width="2" height="2" fill="#e03030"/><rect x="11" y="10" width="2" height="2" fill="#30a030"/><rect x="10" y="12" width="2" height="2" fill="#f0c020"/></svg>
<svg class="a" style="left:925px;top:745px" width="16" height="16" viewBox="0 0 16 16"><path d="M1 6H4L9 1.500V14.500L4 10H1Z" fill="#d86a50" stroke="#7a2a1a" stroke-width=".8"/><path d="M11 4.500Q13 8 11 11.500M13 3Q15.500 8 13 13" fill="none" stroke="#7a2a1a" stroke-width="1.100"/></svg>
<svg class="a" style="left:943px;top:745px" width="16" height="16" viewBox="0 0 16 16"><circle cx="7" cy="7" r="6" fill="#8a8f98" stroke="#555"/><circle cx="7" cy="7" r="3" fill="#c8ccd4"/><circle cx="7" cy="7" r="1.300" fill="#555"/><path d="M9 15L15 10" stroke="#a8a0e8" stroke-width="1.300"/></svg>
<svg class="a" style="left:961px;top:745px" width="16" height="16" viewBox="0 0 16 16"><path d="M2 3L8 1V4H11V7L8 7V9Z" fill="#2fa83a" stroke="#1a6a22" stroke-width=".6"/><path d="M3 10L11 7.500L15 11L7 14.500Z" fill="#a8acb4" stroke="#444" stroke-width=".8"/><path d="M7 14.500L15 11V12.500L7 16Z" fill="#666"/></svg>
<div class="a t" style="left:982.5px;top:743px;font:11px/20px 'Liberation Sans',sans-serif;color:#fff;letter-spacing:0.194px;">00:30</div>
</body></html>
